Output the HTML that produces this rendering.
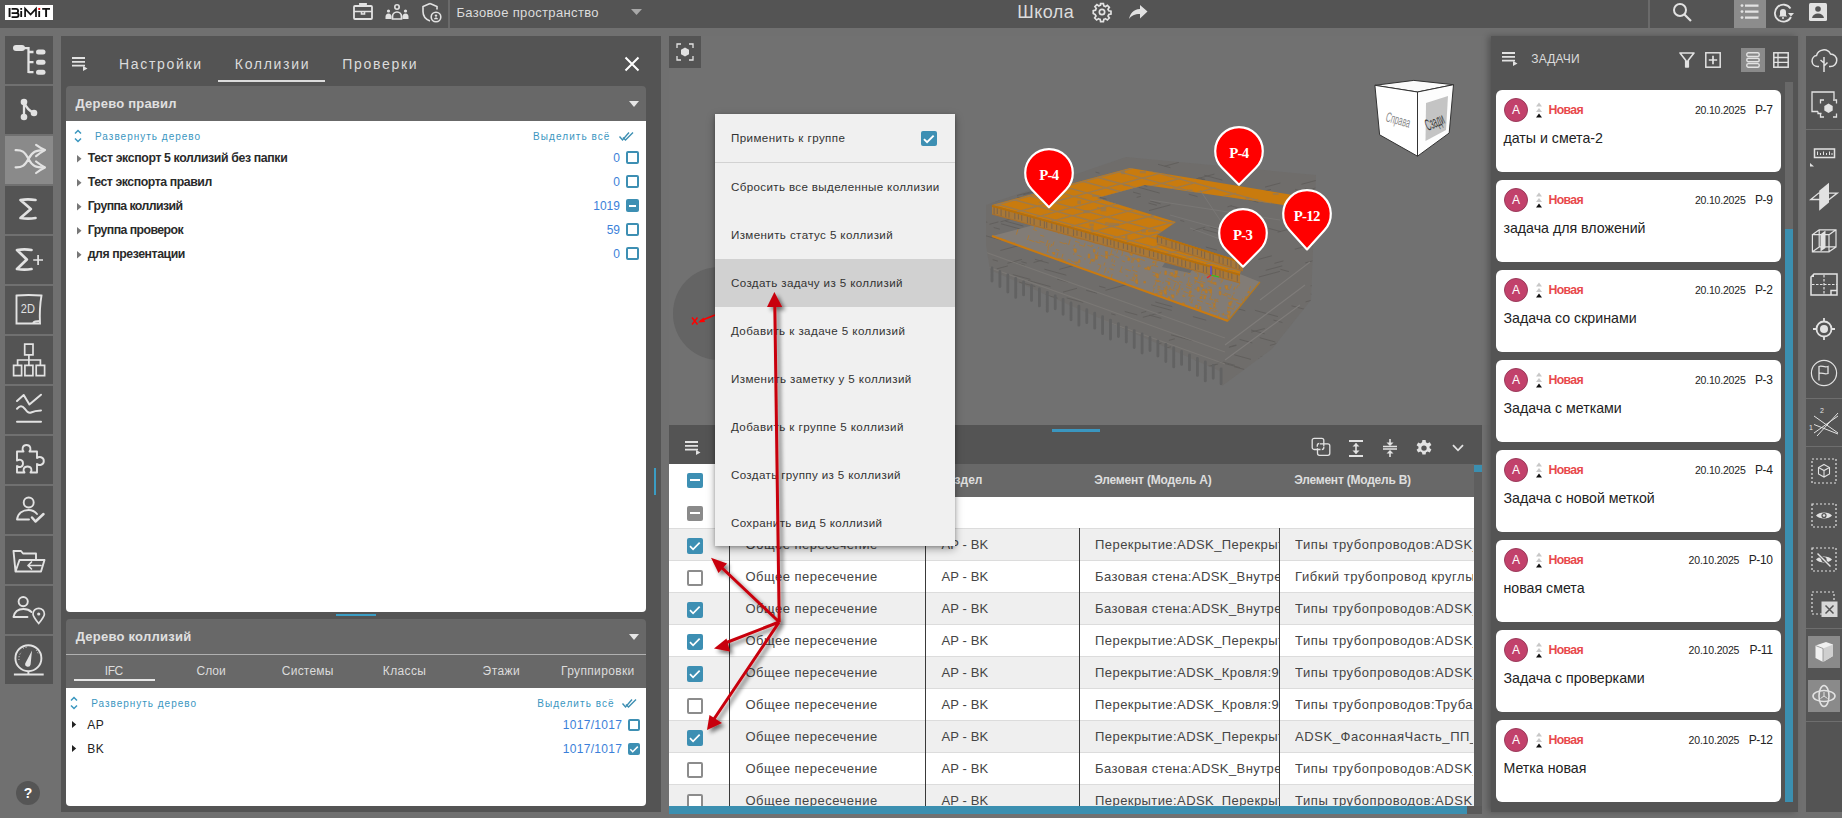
<!DOCTYPE html>
<html><head><meta charset="utf-8">
<style>
*{margin:0;padding:0;box-sizing:border-box}
html,body{width:1842px;height:818px;overflow:hidden;background:#707070;font-family:"Liberation Sans",sans-serif;position:relative}
.a{position:absolute}
.t{position:absolute;white-space:nowrap;line-height:1}
svg{position:absolute;overflow:visible}
</style></head><body>
<!-- TOPBAR -->
<div class="a" style="left:0px;top:0px;width:1842px;height:28px;background:#545454;"></div>
<div class="a" style="left:5px;top:5px;width:48px;height:15px;background:#fff;"></div>
<svg style="left:5px;top:5px" width="48" height="15" viewBox="0 0 48 15"><rect x="3.6" y="3" width="1.9" height="9" fill="#111"/><path d="M6.6 3.9h4.4a2.1 2.1 0 0 1 0 4.2H6.6M6.6 8.1h5a2 2 0 0 1 0 4H6.6" fill="none" stroke="#111" stroke-width="1.8"/><rect x="15.3" y="6" width="1.8" height="6" fill="#111"/><rect x="15.3" y="3" width="1.8" height="1.8" fill="#111"/><path d="M20.1 12V3.6l5.5 6L31 3.6V12" fill="none" stroke="#111" stroke-width="1.7"/><rect x="33.3" y="6" width="1.8" height="6" fill="#111"/><rect x="33.3" y="3" width="1.9" height="1.9" fill="#e00"/><path d="M37.2 3.9h7.8M41.1 3.9V12" fill="none" stroke="#111" stroke-width="1.9"/></svg>
<svg style="left:353px;top:2px" width="20" height="18" viewBox="0 0 20 18"><path d="M7 3.8V2h6v1.8" fill="none" stroke="#e2e2e2" stroke-width="1.8"/><rect x="1" y="4" width="18" height="13" rx="1" fill="none" stroke="#e2e2e2" stroke-width="1.8"/><path d="M1 9.5h18M8.5 9.5v2.5h3v-2.5" fill="none" stroke="#e2e2e2" stroke-width="1.6"/></svg>
<svg style="left:385px;top:4px" width="24" height="16" viewBox="0 0 24 16"><circle cx="12" cy="3" r="2.2" fill="none" stroke="#e2e2e2" stroke-width="1.6"/><path d="M7.5 15v-2.5c0-2.5 2-4.5 4.5-4.5s4.5 2 4.5 4.5V15z" fill="none" stroke="#e2e2e2" stroke-width="1.7"/><circle cx="3.5" cy="7" r="1.6" fill="#e2e2e2"/><circle cx="20.5" cy="7" r="1.6" fill="#e2e2e2"/><path d="M0.5 15v-2.5c0-1.5 1-3 3-3s3 1.5 3 3V15zM17.5 15v-2.5c0-1.5 1-3 3-3s3 1.5 3 3V15z" fill="#e2e2e2"/></svg>
<svg style="left:421px;top:2px" width="22" height="22" viewBox="0 0 22 22"><path d="M9 1.5L2 4.5v5c0 4.5 3 8 7 9.5" fill="none" stroke="#e2e2e2" stroke-width="1.6"/><path d="M9 1.5l7 3v3" fill="none" stroke="#e2e2e2" stroke-width="1.6"/><circle cx="15" cy="15" r="4.8" fill="#545454" stroke="#e2e2e2" stroke-width="1.6"/><circle cx="15" cy="13.6" r="1.2" fill="#e2e2e2"/><path d="M12.8 17.3c.5-1.2 1.2-1.7 2.2-1.7s1.7.5 2.2 1.7z" fill="#e2e2e2"/></svg>
<div class="a" style="left:448px;top:0px;width:2px;height:28px;background:#6a6a6a;"></div>
<div class="t" style="left:456.48px;top:6.40px;font-size:13px;color:#dcdcdc;letter-spacing:0.343px">Базовое пространство</div>
<svg style="left:631px;top:9px" width="11" height="6" viewBox="0 0 11 6"><path d="M0 0h11L5.5 6z" fill="#a8a8a8"/></svg>
<div class="t" style="left:1017.28px;top:2.56px;font-size:18px;color:#dcdcdc;letter-spacing:0.434px">Школа</div>
<svg style="left:1092px;top:2px" width="20" height="20" viewBox="0 0 24 24"><path fill="none" stroke="#e2e2e2" stroke-width="2" d="M10.3 2h3.4l.5 2.7c.7.2 1.3.5 1.9.9l2.3-1.6 2.4 2.4-1.6 2.3c.4.6.7 1.2.9 1.9l2.7.5v3.4l-2.7.5c-.2.7-.5 1.3-.9 1.9l1.6 2.3-2.4 2.4-2.3-1.6c-.6.4-1.2.7-1.9.9l-.5 2.7h-3.4l-.5-2.7c-.7-.2-1.3-.5-1.9-.9l-2.3 1.6-2.4-2.4 1.6-2.3c-.4-.6-.7-1.2-.9-1.9L1.5 13.7v-3.4l2.7-.5c.2-.7.5-1.3.9-1.9L3.5 5.6l2.4-2.4 2.3 1.6c.6-.4 1.2-.7 1.9-.9z"/><circle cx="12" cy="12" r="3.2" fill="none" stroke="#e2e2e2" stroke-width="2"/></svg>
<svg style="left:1129px;top:5px" width="19" height="15" viewBox="0 0 19 15"><path d="M11 0v4C4 4.5 1 9 0 14c2.5-3.5 5.5-5 11-5v4.5L18.5 6.5z" fill="#e2e2e2"/></svg>
<div class="a" style="left:1648px;top:0px;width:2px;height:28px;background:#6a6a6a;"></div>
<svg style="left:1672px;top:2px" width="22" height="22" viewBox="0 0 22 22"><circle cx="8" cy="8" r="6" fill="none" stroke="#e2e2e2" stroke-width="2"/><path d="M12.5 12.5L19 19" stroke="#e2e2e2" stroke-width="2.2"/></svg>
<div class="a" style="left:1734px;top:0px;width:32px;height:28px;background:#8c8c8c;"></div>
<svg style="left:1740px;top:4px" width="20" height="16" viewBox="0 0 20 16"><circle cx="2" cy="1.6" r="1.4" fill="#e2e2e2"/><circle cx="2" cy="7.6" r="1.4" fill="#e2e2e2"/><circle cx="2" cy="13.6" r="1.4" fill="#e2e2e2"/><path d="M5 1.6h13.5M5 7.6h13.5M5 13.6h13.5" stroke="#e2e2e2" stroke-width="2.2"/></svg>
<svg style="left:1773px;top:2px" width="22" height="22" viewBox="0 0 22 22"><path d="M17.5 6.5A8.5 8.5 0 1 0 18 15" fill="none" stroke="#e2e2e2" stroke-width="1.8"/><path d="M15 11h6l-3 3.5z" fill="#e2e2e2"/><path d="M6 14.5h8l-1-1.5v-3a3 3 0 0 0-6 0v3z" fill="#e2e2e2"/><circle cx="10" cy="16" r="1" fill="#e2e2e2"/></svg>
<svg style="left:1809px;top:3px" width="18" height="18" viewBox="0 0 18 18"><rect width="18" height="18" rx="1.5" fill="#e2e2e2"/><circle cx="9" cy="6" r="2.8" fill="#545454"/><path d="M3 15c.5-3 3-4.5 6-4.5s5.5 1.5 6 4.5z" fill="#545454"/></svg>
<!-- LEFT TOOLBAR -->
<div class="a" style="left:5px;top:36px;width:48px;height:48px;background:#545454;"></div>
<svg style="left:5px;top:36px" width="48" height="48" viewBox="0 0 48 48"><rect x="8" y="9" width="12" height="6" rx="3" fill="#e2e2e2"/><path d="M19 12.2h4.5V37M23.5 16h5M23.5 26.2h5M23.5 36.2h5" fill="none" stroke="#e2e2e2" stroke-width="2.3"/><rect x="31" y="13.6" width="9.5" height="5" rx="2.5" fill="#e2e2e2"/><rect x="31" y="23.8" width="9.5" height="5" rx="2.5" fill="#e2e2e2"/><rect x="31" y="33.8" width="9.5" height="5" rx="2.5" fill="#e2e2e2"/></svg>
<div class="a" style="left:5px;top:86px;width:48px;height:48px;background:#545454;"></div>
<svg style="left:5px;top:86px" width="48" height="48" viewBox="0 0 48 48"><path d="M19 16V31M19 16Q22 24 29 27" fill="none" stroke="#e2e2e2" stroke-width="2.3"/><circle cx="19" cy="16" r="3.3" fill="#e2e2e2"/><circle cx="19" cy="31" r="3.3" fill="#e2e2e2"/><circle cx="29" cy="27" r="3.3" fill="#e2e2e2"/></svg>
<div class="a" style="left:5px;top:136px;width:48px;height:48px;background:#8a8a8a;"></div>
<svg style="left:5px;top:136px" width="48" height="48" viewBox="0 0 48 48"><path d="M10.6 14.1C17 13.8 19.5 15.5 23.5 22.9S30.5 31.4 39.5 31.4M10.6 31.4C17 31.6 19.5 30 23.5 22.9S30.5 14.1 39.5 14.1" fill="none" stroke="#e2e2e2" stroke-width="2.2" stroke-linecap="round"/><path d="M31.1 8.8Q35.5 12 39.9 14.1Q35.5 16.5 31.1 20.2M31.1 25.5Q35.5 29 39.9 31.4Q35.5 33.5 31.1 37" fill="none" stroke="#e2e2e2" stroke-width="2.2" stroke-linecap="round" stroke-linejoin="round"/></svg>
<div class="a" style="left:5px;top:186px;width:48px;height:48px;background:#545454;"></div>
<svg style="left:5px;top:186px" width="48" height="48" viewBox="0 0 48 48"><path d="M30.5 14C26 13.3 20 13.3 15.5 14L25.8 23L15.5 32C20 32.7 26 32.7 30.5 32" fill="none" stroke="#e2e2e2" stroke-width="2.7" stroke-linecap="round" stroke-linejoin="round"/></svg>
<div class="a" style="left:5px;top:236px;width:48px;height:48px;background:#545454;"></div>
<svg style="left:5px;top:236px" width="48" height="48" viewBox="0 0 48 48"><path d="M26.5 14C22.5 13.3 16.5 13.3 12 14L21.8 23.5L12 33C16.5 33.7 22.5 33.7 26.5 33" fill="none" stroke="#e2e2e2" stroke-width="2.7" stroke-linecap="round" stroke-linejoin="round"/><path d="M28.2 24h9.8M33.1 19.1v9.8" stroke="#e2e2e2" stroke-width="1.7"/></svg>
<div class="a" style="left:5px;top:286px;width:48px;height:48px;background:#545454;"></div>
<svg style="left:5px;top:286px" width="48" height="48" viewBox="0 0 48 48"><path d="M11.5 9.5C19 8.8 28 8.8 36.5 9.5C35 18 34.5 28 35 37.5H11.5z" fill="none" stroke="#e2e2e2" stroke-width="1.9"/><path d="M28 37c1-1.5 3-2 7-2" fill="none" stroke="#e2e2e2" stroke-width="1.8"/><text x="0" y="0" font-size="12.5" fill="#e2e2e2" font-family="Liberation Sans" transform="translate(15.8 27) scale(0.88 1)">2D</text></svg>
<div class="a" style="left:5px;top:336px;width:48px;height:48px;background:#545454;"></div>
<svg style="left:5px;top:336px" width="48" height="48" viewBox="0 0 48 48"><path d="M19.7 8.2h8.3v10.6h-8.3zM8.6 29.3h8v10.3h-8zM19.9 29.3h8v10.3h-8zM31.2 29.3h8.4v10.3h-8.4zM23.9 18.8V24M12.6 29.3V24h22.8v5.3M23.9 24v5.3" fill="none" stroke="#e2e2e2" stroke-width="1.7"/></svg>
<div class="a" style="left:5px;top:386px;width:48px;height:48px;background:#545454;"></div>
<svg style="left:5px;top:386px" width="48" height="48" viewBox="0 0 48 48"><path d="M12 15L18.7 9L24.4 18.5L36 8.7M12 22.7C15 19.5 17 19.5 20 23C22 26 24 27.5 26 26.5C29 25 33 24.5 36 24.4M12 35.7H36" fill="none" stroke="#e2e2e2" stroke-width="2" stroke-linecap="round" stroke-linejoin="round"/></svg>
<div class="a" style="left:5px;top:436px;width:48px;height:48px;background:#545454;"></div>
<svg style="left:5px;top:436px" width="48" height="48" viewBox="0 0 48 48"><path d="M12 15.5h6.5c-1.8-2-1.2-6.5 3-6.5s4.8 4.5 3 6.5H32v6.5c2-1.8 6.8-1.2 6.8 3s-4.8 4.8-6.8 3V36.5h-6.5c1.8-2 1.2-6-3-6s-4.8 4-3 6H12v-6.5c2 1.8 6 1.2 6-2.6s-4-4.5-6-2.8z" fill="none" stroke="#e2e2e2" stroke-width="1.9" stroke-linejoin="round"/></svg>
<div class="a" style="left:5px;top:486px;width:48px;height:48px;background:#545454;"></div>
<svg style="left:5px;top:486px" width="48" height="48" viewBox="0 0 48 48"><circle cx="23.7" cy="16.5" r="5" fill="none" stroke="#e2e2e2" stroke-width="1.9"/><path d="M12 33.5C13 27 18 24 23.5 24C27 24 30 25.5 32 28M12 33.5h12" fill="none" stroke="#e2e2e2" stroke-width="1.9" stroke-linecap="round"/><path d="M27 31.5l3.5 4L38.5 28" fill="none" stroke="#e2e2e2" stroke-width="2.5" stroke-linecap="round" stroke-linejoin="round"/></svg>
<div class="a" style="left:5px;top:536px;width:48px;height:48px;background:#545454;"></div>
<svg style="left:5px;top:536px" width="48" height="48" viewBox="0 0 48 48"><path d="M10.5 35.5L8.5 15H16l2 2.5h13v6M10.5 35.5H36L39.5 24H14.5z" fill="none" stroke="#e2e2e2" stroke-width="1.9" stroke-linejoin="round"/><path d="M36 29.5H23M26.5 26l-3.5 3.5l3.5 3.5" fill="none" stroke="#e2e2e2" stroke-width="1.7" stroke-linecap="round" stroke-linejoin="round"/></svg>
<div class="a" style="left:5px;top:586px;width:48px;height:48px;background:#545454;"></div>
<svg style="left:5px;top:586px" width="48" height="48" viewBox="0 0 48 48"><circle cx="18.2" cy="15.6" r="4.6" fill="none" stroke="#e2e2e2" stroke-width="1.9"/><path d="M8.5 31C9.5 25.5 13 23 18.5 23C22 23 24.5 24 26.5 26M8.5 31h14" fill="none" stroke="#e2e2e2" stroke-width="1.9" stroke-linecap="round"/><path d="M33.7 37.5C30 33 28 30.5 28 28a5.7 5.7 0 0 1 11.4 0c0 2.5-2 5-5.7 9.5z" fill="none" stroke="#e2e2e2" stroke-width="1.7"/><circle cx="33.7" cy="28" r="1.6" fill="#e2e2e2"/></svg>
<div class="a" style="left:5px;top:636px;width:48px;height:48px;background:#545454;"></div>
<svg style="left:5px;top:636px" width="48" height="48" viewBox="0 0 48 48"><circle cx="23.4" cy="22.2" r="13" fill="none" stroke="#e2e2e2" stroke-width="1.9"/><path d="M8.9 38.5h29.8M23.4 35.2v3.3" fill="none" stroke="#e2e2e2" stroke-width="1.9"/><path d="M20.2 27.5L27 14.5L25.6 28.5A2.6 2.6 0 0 1 20.2 27.5z" fill="#e2e2e2"/><path d="M14 24a9.5 9.5 0 0 1 2.5-8M18 12.5a9.5 9.5 0 0 1 4-1.3M31 14a9.5 9.5 0 0 1 2.5 5" fill="none" stroke="#e2e2e2" stroke-width="1" stroke-dasharray="1 1.8"/></svg>
<div class="a" style="left:16px;top:781px;width:24px;height:24px;border-radius:50%;background:#555"></div>
<div class="t" style="left:23.72px;top:786.15px;font-size:14px;color:#fff;font-weight:bold">?</div>
<!-- LEFT PANEL -->
<div class="a" style="left:61px;top:36px;width:600px;height:776px;background:#545454;"></div>
<div class="a" style="left:66px;top:86px;width:580px;height:35px;background:#686868;border-radius:4px 4px 0 0"></div>
<div class="a" style="left:66px;top:121px;width:580px;height:491px;background:#fff;border-radius:0 0 4px 4px"></div>
<div class="a" style="left:66px;top:619px;width:580px;height:69px;background:#686868;border-radius:4px 4px 0 0"></div>
<div class="a" style="left:66px;top:688px;width:580px;height:118px;background:#fff;border-radius:0 0 4px 4px"></div>
<svg style="left:72px;top:57px" width="16" height="14" viewBox="0 0 16 14"><path d="M0 1h13M0 4.8h13M0 8.6h13" stroke="#e2e2e2" stroke-width="1.8"/><path d="M11 9v5l4.5-2.5z" fill="#e2e2e2"/></svg>
<div class="t" style="left:119.04px;top:56.95px;font-size:14px;color:#dcdcdc;letter-spacing:1.684px">Настройки</div>
<div class="t" style="left:234.84px;top:56.95px;font-size:14px;color:#dcdcdc;letter-spacing:1.695px">Коллизии</div>
<div class="t" style="left:342.24px;top:56.95px;font-size:14px;color:#dcdcdc;letter-spacing:1.698px">Проверки</div>
<div class="a" style="left:218px;top:79.5px;width:107px;height:2.3px;background:#dcdcdc;"></div>
<svg style="left:624px;top:56px" width="16" height="16" viewBox="0 0 16 16"><path d="M1.5 1.5L14.5 14.5M14.5 1.5L1.5 14.5" stroke="#fff" stroke-width="2"/></svg>
<div class="t" style="left:75.48px;top:96.60px;font-size:13px;color:#e0e0e0;font-weight:bold;letter-spacing:0.215px">Дерево правил</div>
<svg style="left:629px;top:101px" width="10" height="6" viewBox="0 0 10 6"><path d="M0 0h10L5 6z" fill="#e6e6e6"/></svg>
<svg style="left:74px;top:129px" width="8" height="14" viewBox="0 0 8 14"><path d="M1 4.5L4 1.5L7 4.5M1 9.5L4 12.5L7 9.5" fill="none" stroke="#3a96bf" stroke-width="1.5"/></svg>
<div class="t" style="left:95.00px;top:131.73px;font-size:10px;color:#3a96bf;letter-spacing:1.002px">Развернуть дерево</div>
<div class="t" style="left:533.10px;top:131.73px;font-size:10px;color:#3a96bf;letter-spacing:1.057px">Выделить всё</div>
<svg style="left:619px;top:132px" width="15" height="9" viewBox="0 0 15 9"><path d="M0.5 4.5l3 3.5L10 0.5M4 5.5l2.5 2.5L14 0.5" fill="none" stroke="#3d8fb3" stroke-width="1.4"/></svg>
<svg style="left:77px;top:154.7px" width="4.5" height="7.5" viewBox="0 0 4.5 7.5"><path d="M0 0L4.5 3.75L0 7.5z" fill="#777"/></svg>
<div class="t" style="left:87.71px;top:151.79px;font-size:12.3px;color:#2a2a2a;font-weight:bold;letter-spacing:-0.371px">Тест экспорт 5 коллизий без папки</div>
<div class="t" style="left:613.31px;top:152.04px;font-size:12px;color:#3b7fd9">0</div>
<div class="a" style="left:626px;top:151.2px;width:13px;height:13px;border:2px solid #3d8fb3;border-radius:2px;background:#fff"></div>
<svg style="left:77px;top:178.7px" width="4.5" height="7.5" viewBox="0 0 4.5 7.5"><path d="M0 0L4.5 3.75L0 7.5z" fill="#777"/></svg>
<div class="t" style="left:87.71px;top:175.79px;font-size:12.3px;color:#2a2a2a;font-weight:bold;letter-spacing:-0.435px">Тест экспорта правил</div>
<div class="t" style="left:613.31px;top:176.04px;font-size:12px;color:#3b7fd9">0</div>
<div class="a" style="left:626px;top:175.2px;width:13px;height:13px;border:2px solid #3d8fb3;border-radius:2px;background:#fff"></div>
<svg style="left:77px;top:202.7px" width="4.5" height="7.5" viewBox="0 0 4.5 7.5"><path d="M0 0L4.5 3.75L0 7.5z" fill="#777"/></svg>
<div class="t" style="left:87.71px;top:199.79px;font-size:12.3px;color:#2a2a2a;font-weight:bold;letter-spacing:-0.581px">Группа коллизий</div>
<div class="t" style="left:593.28px;top:200.04px;font-size:12px;color:#3b7fd9">1019</div>
<div class="a" style="left:626px;top:199.2px;width:13px;height:13px;background:#3d8fb3;border-radius:2px"></div>
<div class="a" style="left:629px;top:204.7px;width:7px;height:2px;background:#fff"></div>
<svg style="left:77px;top:226.7px" width="4.5" height="7.5" viewBox="0 0 4.5 7.5"><path d="M0 0L4.5 3.75L0 7.5z" fill="#777"/></svg>
<div class="t" style="left:87.71px;top:223.79px;font-size:12.3px;color:#2a2a2a;font-weight:bold;letter-spacing:-0.549px">Группа проверок</div>
<div class="t" style="left:606.63px;top:224.04px;font-size:12px;color:#3b7fd9">59</div>
<div class="a" style="left:626px;top:223.2px;width:13px;height:13px;border:2px solid #3d8fb3;border-radius:2px;background:#fff"></div>
<svg style="left:77px;top:250.7px" width="4.5" height="7.5" viewBox="0 0 4.5 7.5"><path d="M0 0L4.5 3.75L0 7.5z" fill="#777"/></svg>
<div class="t" style="left:87.71px;top:247.79px;font-size:12.3px;color:#2a2a2a;font-weight:bold;letter-spacing:-0.433px">для презентации</div>
<div class="t" style="left:613.31px;top:248.04px;font-size:12px;color:#3b7fd9">0</div>
<div class="a" style="left:626px;top:247.2px;width:13px;height:13px;border:2px solid #3d8fb3;border-radius:2px;background:#fff"></div>
<div class="a" style="left:336px;top:614px;width:40px;height:2px;background:#3a9dc4;"></div>
<div class="a" style="left:654px;top:468px;width:2px;height:27px;background:#3a9dc4;"></div>
<div class="t" style="left:75.68px;top:630.10px;font-size:13px;color:#e0e0e0;font-weight:bold;letter-spacing:0.239px">Дерево коллизий</div>
<svg style="left:629px;top:633.5px" width="10" height="6" viewBox="0 0 10 6"><path d="M0 0h10L5 6z" fill="#e6e6e6"/></svg>
<div class="a" style="left:66px;top:654px;width:580px;height:1px;background:#b0b0b0;"></div>
<div class="t" style="left:104.82px;top:665.34px;font-size:12px;color:#dcdcdc;letter-spacing:-0.435px">IFC</div>
<div class="t" style="left:196.52px;top:665.34px;font-size:12px;color:#dcdcdc;letter-spacing:0.027px">Слои</div>
<div class="t" style="left:281.82px;top:665.34px;font-size:12px;color:#dcdcdc;letter-spacing:0.230px">Системы</div>
<div class="t" style="left:382.82px;top:665.34px;font-size:12px;color:#dcdcdc;letter-spacing:0.374px">Классы</div>
<div class="t" style="left:482.62px;top:665.34px;font-size:12px;color:#dcdcdc;letter-spacing:0.417px">Этажи</div>
<div class="t" style="left:561.02px;top:665.34px;font-size:12px;color:#dcdcdc;letter-spacing:0.342px">Группировки</div>
<div class="a" style="left:74px;top:679px;width:81px;height:2px;background:#e6e6e6;"></div>
<svg style="left:70px;top:696px" width="8" height="14" viewBox="0 0 8 14"><path d="M1 4.5L4 1.5L7 4.5M1 9.5L4 12.5L7 9.5" fill="none" stroke="#3a96bf" stroke-width="1.5"/></svg>
<div class="t" style="left:91.20px;top:698.74px;font-size:10px;color:#3a96bf;letter-spacing:0.983px">Развернуть дерево</div>
<div class="t" style="left:537.20px;top:698.74px;font-size:10px;color:#3a96bf;letter-spacing:1.075px">Выделить всё</div>
<svg style="left:622px;top:699px" width="15" height="9" viewBox="0 0 15 9"><path d="M0.5 4.5l3 3.5L10 0.5M4 5.5l2.5 2.5L14 0.5" fill="none" stroke="#3d8fb3" stroke-width="1.4"/></svg>
<svg style="left:72px;top:721.0px" width="4.2" height="7" viewBox="0 0 4.2 7"><path d="M0 0L4.2 3.5L0 7z" fill="#222"/></svg>
<div class="t" style="left:87.32px;top:718.84px;font-size:12px;color:#222;letter-spacing:0.452px">AP</div>
<div class="t" style="left:562.72px;top:718.84px;font-size:12px;color:#3b7fd9;letter-spacing:0.304px">1017/1017</div>
<div class="a" style="left:628px;top:719.0px;width:12px;height:12px;border:2px solid #3d8fb3;border-radius:2px;background:#fff"></div>
<svg style="left:72px;top:745.2px" width="4.2" height="7" viewBox="0 0 4.2 7"><path d="M0 0L4.2 3.5L0 7z" fill="#222"/></svg>
<div class="t" style="left:87.32px;top:743.04px;font-size:12px;color:#222;letter-spacing:0.452px">BK</div>
<div class="t" style="left:562.72px;top:743.04px;font-size:12px;color:#3b7fd9;letter-spacing:0.304px">1017/1017</div>
<div class="a" style="left:628px;top:743.2px;width:12px;height:12px;background:#3d8fb3;border-radius:2px"></div>
<svg style="left:628px;top:743.2px" width="12" height="12" viewBox="0 0 12 12"><path d="M2.3 6.3l2.4 2.4L9.8 3.6" fill="none" stroke="#fff" stroke-width="1.5"/></svg>
<!-- VIEWPORT -->
<div class="a" style="left:669px;top:36px;width:822px;height:389px;background:#717171;"></div>
<div class="a" style="left:669px;top:36px;width:32px;height:32px;background:#545454;"></div>
<svg style="left:676px;top:43px" width="18" height="18" viewBox="0 0 18 18"><path d="M1 5V1h4M13 1h4v4M17 13v4h-4M5 17H1v-4" fill="none" stroke="#e2e2e2" stroke-width="1.3"/><path d="M9 4.5l4 2.2v4.6L9 13.5l-4-2.2V6.7z" fill="#e2e2e2"/></svg>
<div class="a" style="left:672.6px;top:267.2px;width:92.8px;height:92.8px;border-radius:50%;background:#646464"></div>
<svg style="left:688px;top:308px" width="30" height="20" viewBox="0 0 30 20"><path d="M4 9.5l5.5 7M9.5 9.5L4 16.5" stroke="#f00" stroke-width="1.5"/><path d="M27 7L12 13" stroke="#f00" stroke-width="1.6"/><path d="M10 14.5l5.5-5l1.5 4.5z" fill="#f00"/></svg>
<svg style="left:0;top:0" width="1842" height="818"><defs><clipPath id="cTop"><path d="M992.0 205.0 L1130.0 168.0 L1293.0 195.0 L1290.0 206.0 L1145.0 185.0 L1097.0 198.0 L1176.0 222.0 L1157.0 235.0 L1243.0 262.0 L1240.0 274.0 Z"/></clipPath><clipPath id="cLow"><path d="M992.0 236.0 L1045.0 222.0 L1240.0 274.0 L1260.0 282.0 L1228.0 321.0 Z"/></clipPath><clipPath id="cBody"><path d="M986.0 205.0 L1126.0 157.0 L1316.0 175.0 L1311.0 300.0 L1272.0 349.0 L1222.0 386.0 L1222.0 372.0 L990.0 270.0 L986.0 245.0 Z"/></clipPath></defs><path d="M986.0 205.0 L1126.0 157.0 L1316.0 175.0 L1311.0 300.0 L1272.0 349.0 L1222.0 386.0 L1222.0 372.0 L990.0 270.0 L986.0 245.0 Z" fill="#6f6d6b"/><g clip-path="url(#cBody)"><path d="M1090.1 194.7l16.4 4.5 M1162.2 244.1l5.0 -1.3 M992.7 259.7l5.2 1.4 M1124.3 350.2l6.3 1.7 M1193.3 378.0l15.0 4.1 M1311.9 170.7l20.4 5.6 M1029.0 187.1l9.8 -2.6 M1041.4 293.8l16.2 4.4 M1166.2 174.4l5.0 1.4 M1211.3 258.3l9.9 -2.7 M1134.1 228.9l19.2 -5.2 M1063.0 292.1l14.0 -3.8 M1228.0 226.2l22.8 6.2 M1122.2 334.1l6.8 1.9 M993.3 313.7l18.6 -5.0 M1277.7 232.2l17.3 -4.6 M1177.2 264.9l20.1 -5.4 M1141.2 312.8l5.0 -1.4 M1200.0 388.4l19.7 5.4 M1111.2 313.8l4.3 1.2 M1037.1 186.9l5.0 -1.3 M1024.0 217.0l11.4 -3.1 M1007.4 263.3l14.5 -3.9 M1258.6 358.7l9.2 2.5 M1102.0 363.4l22.4 6.1 M1039.9 213.4l8.4 2.3 M1180.3 220.4l3.9 1.1 M1105.5 290.3l22.3 -6.0 M1155.3 302.0l16.9 4.6 M1285.8 339.4l20.8 -5.6 M1113.4 251.8l5.9 -1.6 M1001.2 175.5l7.9 2.2 M1095.6 172.1l3.9 1.1 M1014.5 243.6l4.4 -1.2 M1188.8 194.2l8.7 2.4 M1103.8 188.3l20.3 -5.4 M1138.4 271.3l5.5 1.5 M1096.5 220.9l19.9 5.4 M987.9 378.7l14.1 3.8 M1164.7 166.2l14.1 -3.8 M1273.5 320.1l8.9 2.4 M1036.8 337.5l14.2 -3.8 M1092.1 211.3l19.5 -5.2 M1269.9 345.4l19.7 -5.3 M1057.1 279.1l10.7 2.9 M989.5 224.3l8.9 -2.4 M1305.2 262.9l22.0 -5.9 M1304.7 243.9l8.1 2.2 M1046.9 207.0l15.9 -4.3 M1265.7 270.3l16.5 -4.4 M1008.8 311.9l21.4 -5.7 M1235.0 269.9l7.3 -2.0 M1093.1 344.2l22.6 6.2 M1116.5 377.8l17.9 4.9 M1023.2 194.8l21.3 -5.7 M1029.7 350.1l22.8 -6.1 M1099.1 286.2l6.4 1.7 M1310.1 309.4l14.0 -3.8 M1127.5 360.5l19.8 5.4 M1065.6 227.4l8.5 -2.3 M1068.2 256.4l6.4 -1.7 M1100.3 265.4l15.1 -4.1 M1123.0 371.1l13.6 -3.6 M1158.0 164.3l12.4 3.4 M981.3 343.8l7.2 2.0 M1226.6 288.0l10.2 -2.7 M1168.9 340.4l5.9 -1.6 M1064.5 223.7l18.8 -5.0 M1171.0 334.8l21.5 5.9 M1188.3 276.3l13.8 -3.7 M1133.8 282.7l13.1 -3.5 M1217.7 361.6l22.1 6.0 M1170.2 377.0l20.1 5.5 M1021.4 261.7l5.3 1.4 M1004.9 314.0l19.0 -5.1 M1032.5 324.7l16.6 4.5 M1280.2 382.5l8.1 -2.2 M1115.4 272.1l23.0 -6.2 M1034.9 259.3l13.8 3.8 M1046.6 233.3l17.8 4.9 M1168.4 261.3l4.2 1.2 M1192.1 277.8l5.1 -1.4 M1248.0 383.5l5.9 1.6 M993.5 339.2l9.1 2.5 M1123.6 369.6l19.7 5.4 M1030.8 371.4l14.9 -4.0 M1010.4 173.2l17.2 4.7 M1004.6 375.8l16.1 -4.3 M1008.5 356.9l5.2 -1.4 M1134.3 238.0l14.5 -3.9 M1071.1 189.7l14.0 3.8 M1017.2 197.1l4.8 1.3 M1086.1 230.2l18.5 5.1 M1150.0 200.9l10.6 2.9 M1065.2 163.5l18.0 -4.8 M1044.4 269.2l21.9 6.0 M1258.4 259.4l13.4 -3.6 M1113.6 276.5l17.2 -4.6 M1096.5 351.4l17.5 -4.7 M1117.6 239.9l4.9 1.3 M1004.0 330.4l8.8 2.4 M1008.7 353.5l20.7 -5.5 M1075.9 215.7l9.5 2.6 M1033.6 262.5l8.9 -2.4 M1310.7 285.8l8.6 -2.3 M1085.2 242.0l3.9 1.1 M1141.4 275.6l7.7 -2.1 M981.7 220.8l5.6 1.5 M994.2 165.2l9.7 2.7 M1179.1 281.7l18.4 -4.9 M1223.4 362.2l11.4 3.1 M1314.8 194.4l17.9 -4.8 M994.9 352.1l21.1 -5.7 M1229.5 346.8l6.6 -1.8 M1151.5 352.0l19.4 -5.2 M1178.6 365.4l17.1 -4.6 M1058.2 167.2l6.4 1.8 M1015.7 352.2l14.7 -3.9 M1192.9 316.6l13.3 3.6 M1251.2 332.1l13.6 -3.6 M1204.2 175.2l18.1 4.9 M1005.3 221.1l18.0 4.9 M1231.5 384.4l13.4 3.7 M1142.9 317.3l18.7 -5.0 M1198.5 177.8l6.7 1.8 M1232.7 230.0l14.8 4.1 M1000.6 221.8l16.8 -4.5 M1209.7 226.9l13.8 3.8 M1138.6 187.3l21.1 5.8 M1312.6 375.3l4.2 1.1 M1258.8 382.7l12.5 3.4 M1051.3 377.5l7.9 -2.1 M1028.2 280.5l22.3 6.1 M1258.9 277.0l21.0 -5.6 M1058.7 366.5l13.3 3.6 M981.2 273.1l12.6 3.4 M1027.8 239.1l10.0 -2.7 M980.6 332.7l20.1 5.5 M1295.0 324.0l21.3 5.8 M1106.6 250.4l23.2 -6.2 M1102.6 258.5l9.2 2.5 M1014.6 352.0l9.4 -2.5 M1064.8 221.1l13.7 3.8 M1106.9 379.9l20.9 -5.6 M1194.5 370.1l22.0 -5.9 M1224.7 171.4l18.0 4.9 M1235.9 308.2l9.4 2.6 M1295.1 189.3l13.0 3.5 M1081.2 330.0l22.7 6.2 M1203.0 229.2l14.6 4.0 M1036.9 197.2l7.9 -2.1 M1149.0 210.6l21.4 -5.7 M1133.0 192.1l7.6 2.1 M1096.3 181.0l8.5 2.3 M1173.7 364.1l18.3 5.0 M1120.7 280.6l11.1 3.0 M1001.1 223.8l22.6 6.2 M1151.2 304.8l20.5 5.6 M1072.1 217.1l11.6 3.2 M1304.3 355.2l20.7 5.7 M991.0 323.2l21.2 5.8 M1179.6 160.0l11.4 -3.1 M1260.7 356.8l22.6 6.2 M1017.1 195.5l14.0 -3.7 M1300.1 326.0l16.4 -4.4 M1135.5 286.8l4.6 -1.2 M1059.1 371.6l16.3 4.5 M1023.5 217.9l16.2 -4.3 M1018.1 176.2l14.0 -3.8 M1111.9 211.4l15.5 4.2 M1082.5 266.0l22.4 -6.0 M1280.5 269.3l8.4 2.3 M1306.6 322.1l9.8 2.7 M1149.4 315.1l12.0 3.3 M1206.9 372.8l8.2 2.3 M1094.9 256.7l17.1 4.7 M1251.0 330.0l13.6 3.7 M1309.8 231.7l19.7 5.4 M1055.3 334.9l9.6 -2.6 M1148.6 203.1l8.2 2.2 M1206.2 378.2l6.7 1.8 M1052.4 384.0l6.6 1.8 M1000.4 250.5l21.2 -5.7 M1229.1 389.4l21.9 6.0 M1043.1 375.3l18.3 5.0 M1205.9 247.1l11.1 3.0 M1037.5 160.7l9.3 2.5 M1304.9 188.5l22.5 6.1 M1101.3 349.0l19.7 5.4 M996.7 268.9l11.1 -3.0 M1045.6 243.8l21.2 5.8 M1119.7 346.7l18.7 5.1 M991.9 174.4l21.6 5.9 M1234.1 366.7l10.4 2.8 M1305.6 301.9l8.9 -2.4 M1087.6 223.4l3.9 -1.1 M1291.6 305.8l22.1 6.0 M1059.5 269.3l22.3 -6.0 M1111.4 217.7l12.2 3.3 M1295.6 202.1l19.4 -5.2 M1259.7 337.7l15.6 4.3 M1088.6 243.2l19.0 5.2 M1047.1 333.2l8.6 2.4 M991.5 287.1l10.2 -2.7 M1280.4 387.2l9.0 2.5 M1012.8 274.6l17.6 4.8 M1059.6 255.9l15.8 -4.2 M1234.3 354.8l16.7 4.6 M1265.9 227.6l14.8 4.0 M1230.9 205.8l8.6 2.4 M1032.1 363.4l15.0 4.1 M1114.7 388.3l13.7 3.7 M1254.9 310.3l23.0 6.3 M1141.4 348.4l20.1 -5.4 M993.7 227.5l6.2 1.7 M1310.8 294.1l21.8 6.0 M1274.5 263.3l8.9 -2.4 M1301.5 184.3l15.4 -4.1 M1054.0 244.8l6.6 1.8 M1066.7 297.9l16.5 4.5 M983.9 235.3l17.0 4.6 M1086.1 206.8l19.2 -5.2 M1001.5 183.3l11.5 -3.1 M1197.3 181.0l7.0 -1.9 M1119.3 225.2l9.8 -2.6 M1086.2 290.3l10.8 2.9 M1273.8 389.2l10.9 3.0 M1227.5 206.8l4.0 -1.1 M1124.1 348.7l11.7 -3.1 M1136.7 197.4l4.2 -1.1 M1197.8 369.3l5.6 -1.5 M1106.1 276.0l6.7 1.8 M1157.2 372.9l6.0 1.6 M1253.6 382.4l7.7 2.1 M1300.6 384.4l13.2 3.6 M1294.9 249.2l21.3 -5.7 M1260.3 196.9l19.0 5.2 M1117.5 354.7l19.9 5.4 M1054.2 251.9l13.9 3.8 M1021.8 216.8l17.9 -4.8 M994.0 289.3l18.5 5.1 M1265.0 187.1l15.4 -4.1 M1193.2 230.4l12.0 -3.2 M1124.8 311.5l12.5 3.4 M987.9 302.3l13.3 3.6 M1239.6 339.4l12.7 3.5 M1140.9 184.6l6.3 1.7 M1011.2 261.7l13.7 3.7 M1196.4 178.9l18.0 -4.8 M1153.9 172.5l13.6 3.7 M1303.3 191.3l20.4 -5.5 M1228.9 347.4l7.6 -2.0 M1147.2 380.0l21.6 5.9 M1248.0 374.0l5.1 1.4 M1237.1 196.5l21.2 5.8 M1257.3 193.0l13.6 -3.6 M1050.8 220.5l13.6 3.7 M992.5 201.9l7.0 -1.9 M1211.1 365.9l7.1 -1.9 M1019.1 282.1l16.2 4.4" stroke="#5f5d5b" stroke-width="1" fill="none" opacity="0.85"/><path d="M985 252 L1225 338" stroke="#7a7774" stroke-width="1.2"/><path d="M985 266 L1225 352" stroke="#7a7774" stroke-width="1.2"/><path d="M985 278 L1225 364" stroke="#7a7774" stroke-width="1.2"/><path d="M1225 345 L1305 285 M1225 360 L1300 305 M1260 300 L1310 262" stroke="#7f7c7a" stroke-width="1.1" fill="none"/></g><path d="M992.0 268.0V281.0 M999.9 271.5V286.5 M1007.8 275.0V292.0 M1015.7 278.4V297.4 M1023.6 281.9V294.9 M1031.5 285.4V300.4 M1039.4 288.9V305.9 M1047.3 292.3V311.3 M1055.2 295.8V308.8 M1063.1 299.3V314.3 M1071.0 302.8V319.8 M1078.9 306.2V325.2 M1086.8 309.7V322.7 M1094.7 313.2V328.2 M1102.6 316.7V333.7 M1110.5 320.1V339.1 M1118.4 323.6V336.6 M1126.3 327.1V342.1 M1134.2 330.6V347.6 M1142.1 334.0V353.0 M1150.0 337.5V350.5 M1157.9 341.0V356.0 M1165.8 344.5V361.5 M1173.7 347.9V366.9 M1181.6 351.4V364.4 M1189.5 354.9V369.9 M1197.4 358.4V375.4 M1205.3 361.9V380.9 M1213.2 365.3V378.3 M1221.1 368.8V383.8" stroke="#626262" stroke-width="2.8" fill="none" stroke-linecap="round"/><path d="M992.0 236.0 L1045.0 222.0 L1240.0 274.0 L1260.0 282.0 L1228.0 321.0 Z" fill="#827c76"/><g clip-path="url(#cLow)"><path d="M1236.0 302.4l5.7 2.0 M1259.7 305.6l5.3 1.9 M1257.7 306.7l5.1 1.8 M1088.6 239.4l5.4 1.9 M1204.3 274.5l4.6 1.6 M996.0 237.5l4.4 1.6 M1175.5 263.7l0.8 -2.5 M1009.5 245.4l2.0 0.7 M1097.3 254.2l0.8 -2.4 M1144.5 291.8l2.6 0.9 M1059.6 242.0l5.2 1.8 M1090.8 275.6l4.2 1.5 M1189.4 294.6l5.0 1.8 M1226.2 319.2l3.4 1.2 M1049.6 224.4l1.3 -4.0 M1061.8 257.8l1.2 -3.8 M1213.6 307.4l2.9 1.0 M1245.8 298.0l0.5 -1.5 M1209.4 298.6l3.6 1.3 M1050.7 247.0l1.0 -3.0 M1211.2 283.7l0.8 -2.7 M1155.5 265.1l0.8 -2.7 M1242.4 321.2l1.5 0.5 M1105.3 254.1l5.0 1.8 M1230.5 306.3l1.8 -5.7 M1205.3 291.6l1.2 -3.7 M1212.0 280.7l1.5 -4.9 M1107.9 273.1l0.6 -1.8 M1057.4 258.2l5.9 2.1 M1056.6 257.2l1.5 -4.7 M1208.3 280.6l4.3 1.5 M1233.7 294.1l0.5 -1.7 M1255.2 288.6l2.4 0.9 M1041.1 226.7l1.4 -4.4 M1181.8 290.0l0.6 -1.9 M1084.0 258.7l1.5 0.5 M1116.7 253.3l0.9 -2.9 M1172.2 269.2l1.6 0.6 M1155.1 263.9l1.5 -4.8 M1103.5 240.2l5.4 1.9 M1000.4 238.4l6.2 2.2 M1158.7 280.9l2.3 0.8 M1136.2 254.2l6.0 2.1 M1098.1 249.0l0.6 -1.9 M1058.6 234.0l1.6 -5.2 M1125.3 269.1l5.7 2.0 M1222.9 315.6l0.8 -2.7 M1157.5 285.9l2.6 0.9 M1175.3 275.5l4.6 1.6 M1110.9 278.6l1.4 -4.6 M1077.3 255.1l4.2 1.5 M1164.2 261.3l2.4 0.8 M1212.7 278.7l2.2 0.8 M1121.9 260.8l3.0 1.1 M1259.5 298.7l6.1 2.1 M1149.5 257.9l5.0 1.8 M1091.1 245.1l2.4 0.9 M1027.4 239.9l1.5 -4.7 M1187.3 285.2l4.4 1.5 M1221.9 282.0l1.3 -4.2 M1135.3 282.8l1.8 -5.6 M1212.4 283.4l4.5 1.6 M1121.7 255.8l1.1 -3.4 M1208.2 286.7l3.5 1.2 M1183.5 291.4l5.9 2.1 M1201.2 279.7l1.2 -3.8 M1033.7 229.9l1.6 -5.1 M1153.0 292.4l1.3 -4.0 M1167.7 278.3l4.0 1.4 M1239.1 318.4l1.0 -3.3 M1079.0 229.6l1.7 0.6 M1124.0 284.5l1.1 -3.4 M1120.4 271.2l1.6 -4.9 M1158.2 291.7l3.3 1.2 M1075.0 241.1l4.5 1.6 M1165.8 295.6l1.0 -3.1 M1233.8 290.1l0.9 -2.8 M1075.4 234.4l5.5 2.0 M1125.7 275.5l2.3 0.8 M1199.4 297.7l2.9 1.0 M1149.3 270.4l1.0 -3.1 M1217.6 318.7l1.8 -5.7 M1080.2 238.9l1.5 0.5 M1253.2 300.9l1.9 0.7 M1105.6 246.9l0.7 -2.2 M1209.3 312.1l1.4 -4.3 M1207.4 281.2l5.5 1.9 M1201.3 293.2l1.1 -3.5 M1165.5 286.7l2.1 0.7 M1040.3 235.1l3.8 1.3 M1180.2 265.4l5.5 1.9 M1179.1 281.3l3.3 1.1 M1237.3 322.8l4.5 1.6 M1189.3 285.0l0.9 -3.0 M1162.7 283.5l0.5 -1.6 M1182.1 295.6l3.2 1.1 M1174.5 269.2l3.5 1.2 M1182.2 270.3l5.4 1.9 M1154.9 285.5l1.9 -6.1 M1214.3 301.4l0.9 -2.8 M1197.4 274.7l1.5 -4.9 M1157.0 293.1l1.5 0.5 M1246.3 304.6l1.6 -5.2 M1187.7 284.0l1.5 -4.7 M1189.4 301.2l1.1 -3.6 M1047.8 248.1l1.6 -5.1 M1189.1 296.4l1.6 -5.2 M1097.9 264.1l3.0 1.1 M1203.3 270.8l4.2 1.5 M1072.6 236.6l5.9 2.1 M1016.3 234.6l1.9 -5.9 M1152.9 275.2l4.6 1.6 M1059.3 258.3l4.7 1.7 M1238.7 325.0l2.1 0.7 M1197.8 303.6l2.3 0.8 M1222.4 294.2l5.0 1.8 M1193.9 280.7l5.9 2.1 M1257.2 297.5l0.5 -1.5 M1211.5 310.5l5.0 1.8 M1231.7 298.6l1.0 -3.2 M1152.7 264.9l5.3 1.9 M1194.8 283.8l1.0 -3.3 M1255.8 299.8l2.9 1.0 M1258.5 306.6l0.9 -3.0 M1263.0 300.7l2.9 1.0 M1233.4 309.8l1.4 -4.3 M1215.7 300.7l2.7 1.0 M1188.6 278.9l0.5 -1.6 M1234.1 289.2l0.9 -2.7 M1227.7 297.8l3.1 1.1 M1181.2 270.3l1.6 -5.0 M1100.7 255.3l3.7 1.3 M1110.5 254.0l3.7 1.3 M1230.2 288.3l1.3 -4.2 M1237.2 303.1l4.3 1.5 M1076.3 264.4l1.0 -3.1 M1139.7 266.9l0.5 -1.6 M1120.8 281.8l5.2 1.8 M1176.6 290.1l1.5 0.5 M1266.3 299.3l4.2 1.5 M1214.7 304.1l1.6 -5.1 M1243.2 311.6l2.4 0.9 M1037.6 255.0l5.6 2.0 M1260.0 291.2l4.3 1.5 M1077.4 229.1l1.3 -4.1 M1254.4 302.2l3.6 1.3 M1265.7 291.4l1.6 0.6 M1139.5 258.9l5.5 1.9 M1224.6 293.0l6.2 2.2 M1079.3 244.7l4.7 1.7 M1187.8 273.2l3.0 1.1 M1064.5 243.0l2.6 0.9 M1182.8 307.5l2.4 0.8 M1235.8 319.4l1.8 -5.5 M1068.5 245.0l1.8 -5.8 M1186.2 287.2l5.4 1.9 M1176.8 295.3l0.5 -1.7 M1161.6 296.5l2.7 1.0 M1068.1 259.4l3.1 1.1 M1153.5 287.2l0.6 -2.0 M1052.4 227.3l2.5 0.9 M1103.9 265.7l1.0 -3.2 M1269.4 294.1l0.9 -2.8 M1047.6 228.7l6.2 2.2 M1217.4 300.3l0.5 -1.4 M1157.2 289.0l5.8 2.1 M1165.1 291.1l1.6 -5.1 M1074.5 261.7l4.4 1.5 M1099.2 270.3l1.5 -4.8 M1169.4 288.8l5.0 1.8 M1192.6 310.1l1.0 -3.0 M1232.6 298.1l5.8 2.1 M1227.1 307.1l5.5 1.9 M1073.5 254.7l0.5 -1.4 M1149.5 270.0l1.5 -4.8 M1227.6 310.3l1.0 -3.2 M1053.6 231.4l1.2 -3.8 M1168.5 274.6l6.1 2.2 M1071.1 261.3l5.4 1.9 M1061.6 233.5l0.5 -1.5 M1177.7 285.1l0.6 -1.9 M1191.4 303.2l1.2 -3.8 M1098.1 271.2l0.7 -2.1 M1221.6 313.9l5.0 1.8 M1238.8 286.1l1.1 -3.4 M1163.2 287.7l5.2 1.8 M1094.2 261.6l1.9 -6.1 M1251.0 299.8l0.5 -1.7 M1262.6 292.9l1.1 -3.4 M1131.3 262.7l1.1 -3.5 M1012.8 247.2l1.6 -5.1 M1197.8 282.3l5.7 2.0 M1183.2 297.1l0.9 -2.7 M1247.2 300.3l4.0 1.4 M1242.0 312.5l4.6 1.6 M1194.4 271.5l2.7 1.0 M1157.6 287.6l2.1 0.7 M1133.8 275.1l0.6 -1.8 M1231.5 298.6l4.6 1.6 M1202.6 294.6l4.4 1.6 M1109.5 268.4l3.9 1.4 M1164.3 297.6l5.6 2.0 M1172.6 280.5l6.2 2.2 M1205.4 302.8l5.6 2.0 M1039.3 240.9l5.0 1.8 M1108.8 244.5l2.2 0.8 M1132.7 262.9l1.7 -5.5 M1171.9 274.9l5.1 1.8 M1224.3 295.6l0.6 -2.0 M1020.5 220.8l1.2 -3.8 M1173.6 288.8l1.8 -5.6 M1132.5 270.2l4.9 1.7 M1138.1 267.2l0.9 -3.0 M1230.0 301.3l2.3 0.8 M1074.0 246.5l0.6 -1.8 M1130.9 257.7l6.1 2.1 M1157.0 255.6l0.5 -1.7 M1172.9 268.3l1.3 -4.0 M1165.2 280.9l3.3 1.2 M1176.3 294.0l1.5 -4.6 M1052.8 245.6l1.3 -4.1 M1249.5 289.6l1.1 -3.5 M1251.6 315.8l5.4 1.9 M1133.5 253.0l3.9 1.4 M1243.9 302.1l1.9 -6.1 M1133.1 280.6l1.2 -3.9 M1075.1 263.2l4.4 1.5 M1260.0 302.0l1.1 -3.4 M1122.0 252.5l0.9 -2.9 M1184.1 276.4l1.2 -3.8 M1110.3 255.6l1.9 -6.2 M1129.8 279.5l5.1 1.8 M1047.0 253.1l1.7 -5.3 M1208.9 307.4l5.2 1.8 M1200.4 294.3l2.7 1.0 M1242.4 301.2l3.6 1.3 M1051.4 226.2l6.1 2.1 M1178.4 289.8l1.8 -5.8 M1130.3 255.0l0.9 -2.9 M1249.8 313.2l2.6 0.9 M1197.0 299.9l5.7 2.0 M1211.8 302.7l3.2 1.1 M1245.7 316.2l0.6 -2.0 M1132.4 268.2l0.6 -2.0 M1119.5 271.4l2.8 1.0 M1035.8 227.6l0.7 -2.2 M1047.4 252.3l2.1 0.7 M1236.7 288.4l1.0 -3.1 M1147.0 252.3l1.9 -5.9 M1094.2 253.9l4.9 1.7 M1241.8 301.0l0.8 -2.6 M1102.7 239.8l1.2 -3.9 M1115.2 250.7l1.4 -4.5 M1114.0 262.7l0.7 -2.3 M1124.7 255.6l4.2 1.5 M1154.9 280.1l2.9 1.0 M1072.2 237.3l1.1 -3.3 M1227.6 289.2l2.1 0.7 M1033.6 229.5l3.1 1.1 M1199.7 281.0l5.5 1.9 M1178.1 293.1l1.8 -5.8 M1190.4 302.2l2.2 0.8 M1111.8 261.8l0.9 -2.9 M1092.4 242.1l4.9 1.7 M1152.1 266.4l0.5 -1.4 M1210.0 299.0l1.7 -5.5 M1028.9 239.8l5.3 1.9 M1249.3 294.2l4.8 1.7 M1220.8 283.3l0.6 -1.9 M1157.0 261.6l1.6 -4.9 M1186.1 284.3l4.8 1.7 M1176.3 262.6l5.1 1.8 M1211.5 280.8l1.3 -4.0 M1190.7 284.2l1.7 0.6 M1132.4 278.7l0.7 -2.1 M1188.1 295.5l3.9 1.4 M1241.2 309.6l5.7 2.0 M1169.3 291.0l1.3 -4.0 M1084.1 246.5l1.1 -3.6 M1215.1 310.1l3.2 1.1 M1035.4 241.5l4.8 1.7 M1056.1 249.4l3.2 1.1 M1031.9 259.0l5.1 1.8 M1219.5 279.6l2.0 0.7 M1137.1 283.1l0.5 -1.5 M1194.7 289.0l4.6 1.6 M1089.8 264.0l1.6 -5.1 M1104.3 273.1l1.7 -5.4 M1087.4 245.2l5.0 1.8 M1093.4 240.5l1.0 -3.2 M1141.4 255.8l0.5 -1.6 M1197.1 279.9l1.8 -5.7 M1159.7 274.5l0.9 -2.8 M1055.4 231.5l1.1 -3.5 M1039.4 254.9l0.7 -2.3 M1021.3 220.7l5.2 1.8 M1115.2 256.4l3.5 1.2 M1152.4 272.0l5.8 2.0 M1111.9 264.6l3.1 1.1 M1046.2 246.0l1.9 -6.0 M1257.2 296.6h2.2v3.4h-1.5z M1093.4 249.4h1.6v2.7h-1.5z M1251.6 311.4h1.6v2.0h-1.5z M1230.9 318.0h2.4v2.3h-1.5z M1105.2 251.6h2.2v2.2h-1.5z M1202.9 289.0h1.2v1.5h-1.5z M1247.1 301.8h2.7v1.8h-1.5z M1105.4 255.7h2.0v2.7h-1.5z M1147.2 266.9h2.0v2.8h-1.5z M1095.4 255.5h1.9v3.6h-1.5z M1210.3 289.1h1.2v4.0h-1.5z M1214.5 315.8h1.8v1.5h-1.5z M1254.8 310.5h1.3v3.3h-1.5z M1078.9 259.7h1.0v2.8h-1.5z M1135.7 279.9h1.9v3.7h-1.5z M1224.8 285.7h2.8v3.6h-1.5z M1136.8 258.7h2.5v3.0h-1.5z M1227.2 314.8h2.5v3.8h-1.5z M1212.7 315.3h1.2v2.6h-1.5z M1224.4 319.7h2.4v1.8h-1.5z M1134.9 275.0h2.2v1.3h-1.5z M1048.6 258.8h1.4v2.7h-1.5z M1165.0 271.0h1.3v3.6h-1.5z M1207.8 289.8h2.9v1.0h-1.5z M1159.4 291.9h2.7v3.4h-1.5z M1063.2 261.1h2.4v2.2h-1.5z M1182.5 302.9h1.8v3.6h-1.5z M1199.5 306.8h1.4v3.7h-1.5z M1195.6 305.2h1.7v2.4h-1.5z M1204.3 296.1h1.0v2.7h-1.5z M1153.8 294.8h3.0v1.1h-1.5z M1127.9 257.9h1.5v2.5h-1.5z M1155.4 274.0h2.9v4.0h-1.5z M1073.5 248.9h2.7v3.3h-1.5z M1219.3 291.4h1.6v3.4h-1.5z M1256.9 295.2h1.6v3.3h-1.5z M1228.8 302.4h1.7v2.7h-1.5z M1168.1 296.8h1.6v4.0h-1.5z M1189.6 290.9h1.5v2.0h-1.5z M1104.6 282.7h1.9v2.3h-1.5z M1200.6 296.4h1.1v1.9h-1.5z M1170.0 272.8h2.9v2.0h-1.5z M1251.4 301.6h1.4v2.7h-1.5z M1251.5 317.6h1.9v3.6h-1.5z M1091.7 259.4h1.6v1.8h-1.5z M1052.3 252.6h2.4v1.7h-1.5z M1171.2 294.9h2.7v2.9h-1.5z M1144.5 268.0h2.2v1.2h-1.5z M1248.0 291.3h1.3v1.6h-1.5z M1213.2 282.4h2.8v1.6h-1.5z M1174.3 274.3h1.8v3.0h-1.5z M1155.7 293.5h1.1v2.9h-1.5z M1168.2 282.0h1.5v2.4h-1.5z M1064.6 229.1h3.0v1.2h-1.5z M1219.4 287.5h1.2v1.5h-1.5z M1129.7 252.9h2.6v2.3h-1.5z M1204.8 290.3h2.3v2.8h-1.5z M1174.8 271.0h2.4v3.3h-1.5z M1227.2 311.2h3.0v2.4h-1.5z M1157.6 280.7h1.3v1.0h-1.5z M1197.4 287.2h1.7v4.0h-1.5z M1153.1 261.3h1.1v1.4h-1.5z M1088.3 254.1h1.4v3.8h-1.5z M1163.6 290.1h2.5v3.8h-1.5z M1113.6 284.0h1.5v3.9h-1.5z M1200.4 284.7h2.6v2.4h-1.5z M1178.4 264.1h2.5v1.2h-1.5z M1213.9 303.9h1.1v2.7h-1.5z M1194.6 277.4h2.3v1.7h-1.5z M1143.9 281.4h1.5v1.6h-1.5z" fill="#d07f10" stroke="#c8780c" stroke-width="0.8" opacity="0.7"/><path d="M1168 258 L1196 264 L1190 273 L1162 267 Z" fill="#6c6c6c"/></g><path d="M992 236 L1228 321" stroke="#c97a10" stroke-width="2"/><path d="M1228 321 L1260 282" stroke="#b3781f" stroke-width="1.2"/><path d="M992.0 205.0 L1130.0 168.0 L1293.0 195.0 L1290.0 206.0 L1145.0 185.0 L1097.0 198.0 L1176.0 222.0 L1157.0 235.0 L1243.0 262.0 L1240.0 274.0 Z" fill="#c97b0e"/><g clip-path="url(#cTop)"><path d="M996.2 203.9l289.2 79.2 M1012.8 199.4l289.2 79.2 M1028.1 195.3l289.2 79.2 M1049.2 189.7l289.2 79.2 M1062.2 186.2l289.2 79.2 M1081.4 181.0l289.2 79.2 M1096.4 177.0l289.2 79.2 M1117.5 171.3l289.2 79.2 M1134.8 166.7l289.2 79.2 M994.0 205.5l144.9 -38.9 M1016.7 211.8l144.9 -38.9 M1036.3 217.1l144.9 -38.9 M1051.3 221.3l144.9 -38.9 M1070.8 226.6l144.9 -38.9 M1091.0 232.1l144.9 -38.9 M1113.1 238.2l144.9 -38.9 M1126.7 241.9l144.9 -38.9 M1149.7 248.2l144.9 -38.9 M1168.1 253.3l144.9 -38.9 M1186.1 258.2l144.9 -38.9 M1206.2 263.7l144.9 -38.9 M1227.5 269.6l144.9 -38.9 M1241.6 273.4l144.9 -38.9" stroke="#8a7a66" stroke-width="1.3" opacity="0.7" fill="none"/><path d="M1260.1 204.6h6.7v3.6h-6.7z M1049.7 260.0h8.0v1.9h-8.0z M1002.3 177.3h7.8v1.0h-7.8z M1268.5 181.6h6.4v1.3h-6.4z M1045.6 240.1h2.5v2.0h-2.5z M1270.6 243.8h7.3v3.9h-7.3z M1004.9 190.8h6.8v3.1h-6.8z M1006.4 220.5h3.4v2.3h-3.4z M1026.5 167.2h7.9v1.9h-7.9z M1258.6 178.3h4.9v1.4h-4.9z M1123.5 184.7h6.1v1.4h-6.1z M1216.5 220.1h2.7v2.1h-2.7z M1143.9 266.1h4.1v1.6h-4.1z M1285.3 262.1h6.4v1.8h-6.4z M1048.2 194.1h2.4v1.1h-2.4z M1147.6 209.9h5.3v2.1h-5.3z M998.2 240.7h5.9v2.6h-5.9z M1159.6 240.9h7.9v3.6h-7.9z M1210.3 208.9h3.9v2.3h-3.9z M1286.9 207.6h4.3v2.2h-4.3z M1037.9 274.8h2.0v2.8h-2.0z M1272.9 193.0h5.7v2.1h-5.7z M1067.2 186.8h2.7v3.5h-2.7z M1230.2 264.9h2.3v3.1h-2.3z M1092.3 236.1h5.3v1.9h-5.3z M1286.5 165.1h6.5v3.6h-6.5z M1148.0 230.2h8.0v1.7h-8.0z M1183.9 246.8h4.3v3.1h-4.3z M1113.1 222.9h5.7v3.0h-5.7z M1091.6 234.2h5.3v1.7h-5.3z M1178.8 194.1h7.5v2.4h-7.5z M1211.5 222.4h4.9v1.7h-4.9z M1037.6 267.0h5.2v2.6h-5.2z M1153.2 254.5h3.4v1.5h-3.4z M1241.6 215.6h5.8v3.5h-5.8z M1263.2 260.5h2.3v2.1h-2.3z M1244.6 255.0h2.7v1.5h-2.7z M1070.4 176.3h4.1v3.4h-4.1z M1151.4 214.8h2.5v2.2h-2.5z M1294.1 241.5h4.7v2.4h-4.7z M1234.5 248.5h2.9v3.0h-2.9z M1105.1 222.3h3.4v2.1h-3.4z M1097.0 206.9h2.1v1.6h-2.1z M1166.2 171.4h3.1v3.2h-3.1z M1077.4 200.6h3.5v3.5h-3.5z M1022.4 235.0h7.2v1.6h-7.2z M1121.9 252.2h5.7v2.1h-5.7z M1008.2 213.7h4.2v3.1h-4.2z M1083.6 209.9h5.9v3.4h-5.9z M1100.7 207.4h5.5v3.8h-5.5z M1052.5 271.9h6.3v2.1h-6.3z M1194.7 201.2h2.4v3.3h-2.4z M1108.8 222.8h5.0v3.7h-5.0z M1222.1 167.8h5.6v2.4h-5.6z M1133.7 257.4h4.5v2.4h-4.5z M1262.1 213.4h4.9v2.5h-4.9z M1242.4 238.7h6.4v2.2h-6.4z M1007.2 239.8h5.3v3.3h-5.3z M1226.0 178.0h3.3v1.2h-3.3z M1240.2 176.2h2.5v3.3h-2.5z M1164.3 171.1h6.1v3.1h-6.1z M1139.8 171.0h6.1v2.3h-6.1z M1170.2 274.8h6.9v3.6h-6.9z M1038.7 201.8h5.1v1.0h-5.1z M1291.6 195.2h3.6v1.9h-3.6z M1071.5 259.5h5.3v2.5h-5.3z M1121.1 170.6h3.8v3.6h-3.8z M1235.6 259.2h3.5v1.6h-3.5z M1010.6 224.1h4.2v2.4h-4.2z M1141.7 229.2h4.2v3.4h-4.2z M1055.1 266.1h5.3v1.2h-5.3z M1089.3 223.6h4.5v2.7h-4.5z M1092.1 195.1h6.8v1.9h-6.8z M1208.2 253.3h5.6v2.4h-5.6z M1275.5 213.9h7.3v1.2h-7.3z M1125.1 235.3h2.3v3.6h-2.3z M1016.6 230.6h3.1v3.8h-3.1z M1163.3 253.1h5.0v3.0h-5.0z M1197.5 197.4h3.3v3.5h-3.3z M1038.7 266.0h3.2v1.3h-3.2z M1023.6 251.3h7.7v2.2h-7.7z M1192.7 193.3h7.4v3.1h-7.4z M1041.5 171.2h6.2v1.1h-6.2z M1245.8 197.3h3.4v2.7h-3.4z M1090.6 226.7h2.9v3.7h-2.9z M1092.3 257.5h2.9v3.4h-2.9z M1289.0 208.1h2.2v2.1h-2.2z M1187.2 189.6h5.3v1.3h-5.3z M1134.3 245.1h4.6v3.0h-4.6z M1029.3 256.1h2.7v3.8h-2.7z" fill="#867866" opacity="0.55"/><path d="M1097 198 L1145 185 L1160 190 L1120 205 Z" fill="#9d8468" opacity="0.8"/></g><path d="M992.0 205.0 L1240.0 274.0 L1240.0 283.0 L992.0 214.0 Z" fill="#a87838"/><path d="M994.1 206.6v7.9 M997.3 207.5v6.6 M1001.1 208.5v7.5 M1005.7 209.8v7.9 M1009.0 210.7v7.0 M1014.8 212.4v7.2 M1018.4 213.3v6.2 M1021.7 214.3v6.5 M1027.5 215.9v7.7 M1030.3 216.7v7.8 M1034.1 217.7v7.2 M1040.3 219.4v6.7 M1044.4 220.6v7.3 M1046.7 221.2v6.7 M1051.8 222.6v6.5 M1056.6 224.0v6.4 M1060.9 225.2v6.6 M1063.6 225.9v7.1 M1067.9 227.1v7.1 M1073.5 228.7v7.2 M1077.0 229.7v6.1 M1081.4 230.9v6.2 M1085.8 232.1v6.3 M1089.9 233.2v6.7 M1093.7 234.3v7.3 M1097.4 235.3v6.3 M1103.3 237.0v6.7 M1107.3 238.1v7.7 M1110.7 239.0v6.3 M1114.1 240.0v7.8 M1118.3 241.2v7.0 M1123.4 242.6v6.2 M1127.5 243.7v6.3 M1131.8 244.9v7.0 M1135.7 246.0v6.4 M1140.0 247.2v6.4 M1143.6 248.2v6.5 M1149.4 249.8v7.0 M1153.6 251.0v6.0 M1157.9 252.2v7.0 M1161.8 253.2v7.1 M1165.8 254.4v6.5 M1170.1 255.6v6.3 M1173.3 256.4v6.1 M1177.8 257.7v7.0 M1181.8 258.8v7.8 M1185.5 259.8v7.2 M1190.1 261.1v7.2 M1195.4 262.6v7.4 M1198.1 263.3v6.5 M1203.4 264.8v8.0 M1206.5 265.7v7.2 M1212.0 267.2v7.6 M1215.5 268.2v7.6 M1220.0 269.4v7.8 M1223.2 270.3v7.9 M1228.3 271.7v6.8 M1231.8 272.7v6.5 M1237.3 274.3v7.4" stroke="#75604c" stroke-width="1.1" opacity="0.75"/><path d="M992 205.8 L1240 274.8" stroke="#b86f08" stroke-width="1.8"/><path d="M992 214 L1240 283" stroke="#a8702c" stroke-width="1.2"/><path d="M1157.0 235.0 L1243.0 262.0 L1243.0 271.0 L1157.0 244.0 Z" fill="#a87838"/><path d="M1157.3 236.1v6.7 M1161.6 237.4v6.4 M1166.1 238.8v6.7 M1172.0 240.7v8.0 M1175.9 241.9v7.0 M1179.6 243.1v7.6 M1184.8 244.7v7.5 M1188.5 245.9v6.4 M1192.7 247.2v7.7 M1197.4 248.7v6.2 M1201.5 250.0v6.7 M1204.6 251.0v7.9 M1210.0 252.7v7.5 M1213.2 253.6v7.7 M1219.2 255.5v7.8 M1223.1 256.8v7.7 M1227.5 258.1v7.2 M1231.0 259.2v7.7 M1236.1 260.8v7.7 M1239.3 261.9v7.9" stroke="#75604c" stroke-width="1.1" opacity="0.75"/><path d="M1157 235.8 L1243 262.8" stroke="#b86f08" stroke-width="1.8"/><path d="M1157 244 L1243 271" stroke="#a8702c" stroke-width="1.2"/><path d="M1150 200 L1280 220 M1170 215 L1260 240 M1190 228 L1250 250 M1200 190 L1240 250" stroke="#7d7b79" stroke-width="1" opacity="0.7"/><path d="M1211 275 l8 2" stroke="#2c2" stroke-width="1.2"/><path d="M1211 275 v-9" stroke="#44f" stroke-width="1.2"/><path d="M1211 275 l-4 3" stroke="#e22" stroke-width="1.2"/></svg>
<svg style="left:1021.2px;top:145.2px" width="56" height="66.3" viewBox="1021.2 145.2 56 66.3"><path d="M1049.20 207.50 L1032.06 189.71 A23.8 23.8 0 1 1 1066.34 189.71 Z" fill="#f00" stroke="#fff" stroke-width="2.2" stroke-linejoin="round"/></svg>
<div class="t" style="left:1039.22px;top:168.00px;font-size:14.8px;color:#fff;font-weight:bold;letter-spacing:-0.700px;font-family:'Liberation Serif'">P-4</div>
<svg style="left:1211.2px;top:123.2px" width="56" height="65.8" viewBox="1211.2 123.2 56 65.8"><path d="M1239.20 185.00 L1222.30 167.96 A23.8 23.8 0 1 1 1256.10 167.96 Z" fill="#f00" stroke="#fff" stroke-width="2.2" stroke-linejoin="round"/></svg>
<div class="t" style="left:1229.22px;top:146.00px;font-size:14.8px;color:#fff;font-weight:bold;letter-spacing:-0.700px;font-family:'Liberation Serif'">P-4</div>
<svg style="left:1215.0px;top:205.0px" width="56" height="65.7" viewBox="1215.0 205.0 56 65.7"><path d="M1243.00 266.70 L1226.15 249.81 A23.8 23.8 0 1 1 1259.85 249.81 Z" fill="#f00" stroke="#fff" stroke-width="2.2" stroke-linejoin="round"/></svg>
<div class="t" style="left:1233.02px;top:227.80px;font-size:14.8px;color:#fff;font-weight:bold;letter-spacing:-0.700px;font-family:'Liberation Serif'">P-3</div>
<svg style="left:1279.0px;top:186.2px" width="56" height="67.4" viewBox="1279.0 186.2 56 67.4"><path d="M1307.00 249.60 L1289.38 230.20 A23.8 23.8 0 1 1 1324.62 230.20 Z" fill="#f00" stroke="#fff" stroke-width="2.2" stroke-linejoin="round"/></svg>
<div class="t" style="left:1293.67px;top:209.00px;font-size:14.8px;color:#fff;font-weight:bold;letter-spacing:-0.700px;font-family:'Liberation Serif'">P-12</div>
<svg style="left:0;top:0" width="1842" height="818"><path d="M1374.9 85.3L1413.8 80.4L1453.5 84.7L1417.5 92z" fill="#fafafa" stroke="#333" stroke-width="1"/><path d="M1374.9 85.3L1417.5 92L1417.5 156.2L1379.6 134.8z" fill="#fff" stroke="#333" stroke-width="1"/><path d="M1417.5 92L1453.5 84.7L1449.2 133L1417.5 156.2z" fill="#fdfdfd" stroke="#333" stroke-width="1"/><path d="M1426 103L1448 96L1446 130L1425.5 141z" fill="#c4c4c4"/><text x="0" y="0" font-family="Liberation Sans" font-size="12" fill="#8a8a8a" transform="translate(1385 121) rotate(16) scale(0.6 1.15)">Справа</text><text x="0" y="0" font-family="Liberation Sans" font-size="13" fill="#3a3a3a" transform="translate(1428 131) rotate(-24) scale(0.52 1.25)">Сзади</text></svg>
<!-- TABLE -->
<div class="a" style="left:669px;top:425px;width:813px;height:39px;background:#545454;"></div>
<div class="a" style="left:669px;top:464px;width:813px;height:33px;background:#686868;"></div>
<div class="a" style="left:669px;top:464px;width:60px;height:33px;background:#fff;"></div>
<div class="a" style="left:669px;top:497px;width:805px;height:309px;background:#fff;"></div>
<div class="a" style="left:669px;top:806px;width:805px;height:8px;background:#3b8fb0;"></div>
<div class="a" style="left:1474px;top:464px;width:8px;height:342px;background:#5e5e5e;"></div>
<div class="a" style="left:1474px;top:465px;width:8px;height:7px;background:#3b8fb0;"></div>
<svg style="left:685px;top:441px" width="16" height="14" viewBox="0 0 16 14"><path d="M0 1h13M0 4.8h13M0 8.6h13" stroke="#e2e2e2" stroke-width="1.8"/><path d="M11 9v5l4.5-2.5z" fill="#e2e2e2"/></svg>
<div class="a" style="left:1052px;top:429px;width:48px;height:3px;background:#3a96bf;"></div>
<svg style="left:1311px;top:437px" width="20" height="20" viewBox="0 0 20 20"><path d="M9.5 12.5H3.2a2 2 0 0 1-2-2V3.3a2 2 0 0 1 2-2h7.6a2 2 0 0 1 2 2V9" fill="none" stroke="#e2e2e2" stroke-width="1.3"/><path d="M9 6.8h7.8a2 2 0 0 1 2 2v7.5a2 2 0 0 1-2 2H8.5a2 2 0 0 1-2-2v-5" fill="none" stroke="#e2e2e2" stroke-width="1.3"/><path d="M6.3 9.8V8.5a2 2 0 0 1 2-2" fill="none" stroke="#e2e2e2" stroke-width="1.3"/><path d="M12.8 9.5v1a2 2 0 0 1-2 2" fill="none" stroke="#e2e2e2" stroke-width="1.3"/></svg>
<svg style="left:1348px;top:439px" width="16" height="19" viewBox="0 0 16 19"><path d="M1 2h14M1 17h14" stroke="#e2e2e2" stroke-width="2"/><path d="M8 4.5v10" stroke="#e2e2e2" stroke-width="1.6"/><path d="M4.5 7.5L8 4l3.5 3.5zM4.5 11.5L8 15l3.5-3.5z" fill="#e2e2e2"/></svg>
<svg style="left:1382px;top:438px" width="16" height="20" viewBox="0 0 16 20"><path d="M1 8.5h14M1 11h14" stroke="#e2e2e2" stroke-width="1.5"/><path d="M8 1v5M8 14v5" stroke="#e2e2e2" stroke-width="1.6"/><path d="M4.5 4.5L8 8l3.5-3.5zM4.5 15.5L8 12l3.5 3.5z" fill="#e2e2e2"/></svg>
<svg style="left:1415px;top:439px" width="18" height="18" viewBox="0 0 18 18"><path fill="#e2e2e2" fill-rule="evenodd" d="M7.4 0h3.2l.4 2.4c.6.2 1.1.5 1.6.8l2.2-1 1.6 2.8-1.9 1.5c.1.5.1 1.1 0 1.6l1.9 1.5-1.6 2.8-2.2-1c-.5.3-1 .6-1.6.8l-.4 2.4H7.4L7 12.4c-.6-.2-1.1-.5-1.6-.8l-2.2 1-1.6-2.8 1.9-1.5c-.1-.5-.1-1.1 0-1.6L1.6 5.2l1.6-2.8 2.2 1c.5-.3 1-.6 1.6-.8zM9 5.4a2.7 2.7 0 1 0 0 5.4a2.7 2.7 0 1 0 0-5.4z" transform="translate(0 1)"/></svg>
<svg style="left:1452px;top:444px" width="12" height="8" viewBox="0 0 12 8"><path d="M1 1.2L6 6.3L11 1.2" fill="none" stroke="#e2e2e2" stroke-width="1.8"/></svg>
<div class="t" style="left:939.94px;top:474.14px;font-size:12px;color:#dedede;font-weight:bold">Раздел</div>
<div class="t" style="left:1094.22px;top:474.14px;font-size:12px;color:#dedede;font-weight:bold;letter-spacing:-0.189px">Элемент (Модель А)</div>
<div class="t" style="left:1294.22px;top:474.14px;font-size:12px;color:#dedede;font-weight:bold;letter-spacing:-0.225px">Элемент (Модель B)</div>
<div class="a" style="left:687px;top:472.5px;width:15.5px;height:15.5px;background:#3d8fb3;border-radius:2px"></div>
<div class="a" style="left:690px;top:479.25px;width:9.5px;height:2px;background:#fff"></div>
<div class="a" style="left:687px;top:505.5px;width:15.5px;height:15.5px;background:#8a8a8a;border-radius:2px"></div>
<div class="a" style="left:690px;top:512.25px;width:9.5px;height:2px;background:#fff"></div>
<div class="a" style="left:669px;top:528px;width:805px;height:278px;overflow:hidden">
<div class="a" style="left:0;top:0px;width:805px;height:32px;background:#efefef;border-top:1px solid #dcdcdc"></div>
<div class="a" style="left:0;top:32px;width:805px;height:32px;background:#fff;border-top:1px solid #dcdcdc"></div>
<div class="a" style="left:0;top:64px;width:805px;height:32px;background:#efefef;border-top:1px solid #dcdcdc"></div>
<div class="a" style="left:0;top:96px;width:805px;height:32px;background:#fff;border-top:1px solid #dcdcdc"></div>
<div class="a" style="left:0;top:128px;width:805px;height:32px;background:#efefef;border-top:1px solid #dcdcdc"></div>
<div class="a" style="left:0;top:160px;width:805px;height:32px;background:#fff;border-top:1px solid #dcdcdc"></div>
<div class="a" style="left:0;top:192px;width:805px;height:32px;background:#efefef;border-top:1px solid #dcdcdc"></div>
<div class="a" style="left:0;top:224px;width:805px;height:32px;background:#fff;border-top:1px solid #dcdcdc"></div>
<div class="a" style="left:0;top:256px;width:805px;height:32px;background:#efefef;border-top:1px solid #dcdcdc"></div>
</div>
<div class="a" style="left:669px;top:528px;width:805px;height:278px;overflow:hidden">
<div class="a" style="left:18px;top:10.0px;width:15.5px;height:15.5px;border-radius:2px;background:#3d8fb3"></div>
<svg style="left:18px;top:10.0px" width="15.5" height="15.5" viewBox="0 0 12 12"><path d="M2.3 6.3l2.4 2.4L9.8 3.6" fill="none" stroke="#fff" stroke-width="1.3"/></svg>
<div class="a" style="left:18px;top:42.0px;width:15.5px;height:15.5px;border-radius:2px;background:#fff;border:2px solid #8c8c8c"></div>
<div class="a" style="left:18px;top:74.0px;width:15.5px;height:15.5px;border-radius:2px;background:#3d8fb3"></div>
<svg style="left:18px;top:74.0px" width="15.5" height="15.5" viewBox="0 0 12 12"><path d="M2.3 6.3l2.4 2.4L9.8 3.6" fill="none" stroke="#fff" stroke-width="1.3"/></svg>
<div class="a" style="left:18px;top:106.0px;width:15.5px;height:15.5px;border-radius:2px;background:#3d8fb3"></div>
<svg style="left:18px;top:106.0px" width="15.5" height="15.5" viewBox="0 0 12 12"><path d="M2.3 6.3l2.4 2.4L9.8 3.6" fill="none" stroke="#fff" stroke-width="1.3"/></svg>
<div class="a" style="left:18px;top:138.0px;width:15.5px;height:15.5px;border-radius:2px;background:#3d8fb3"></div>
<svg style="left:18px;top:138.0px" width="15.5" height="15.5" viewBox="0 0 12 12"><path d="M2.3 6.3l2.4 2.4L9.8 3.6" fill="none" stroke="#fff" stroke-width="1.3"/></svg>
<div class="a" style="left:18px;top:170.0px;width:15.5px;height:15.5px;border-radius:2px;background:#fff;border:2px solid #8c8c8c"></div>
<div class="a" style="left:18px;top:202.0px;width:15.5px;height:15.5px;border-radius:2px;background:#3d8fb3"></div>
<svg style="left:18px;top:202.0px" width="15.5" height="15.5" viewBox="0 0 12 12"><path d="M2.3 6.3l2.4 2.4L9.8 3.6" fill="none" stroke="#fff" stroke-width="1.3"/></svg>
<div class="a" style="left:18px;top:234.0px;width:15.5px;height:15.5px;border-radius:2px;background:#fff;border:2px solid #8c8c8c"></div>
<div class="a" style="left:18px;top:266.0px;width:15.5px;height:15.5px;border-radius:2px;background:#fff;border:2px solid #8c8c8c"></div>
</div>
<div class="t" style="left:745.48px;top:538.30px;font-size:13px;color:#444;letter-spacing:0.491px">Общее пересечение</div>
<div class="t" style="left:941.38px;top:538.30px;font-size:13px;color:#444;letter-spacing:0.134px">AP - BK</div>
<div class="t" style="left:1095.08px;top:538.30px;font-size:13px;color:#444;letter-spacing:0.420px;width:183.5px;overflow:hidden;padding-bottom:5px">Перекрытие:ADSK_Перекрытие</div>
<div class="t" style="left:1295.08px;top:538.30px;font-size:13px;color:#444;letter-spacing:0.550px;width:178.4px;overflow:hidden;padding-bottom:5px">Типы трубопроводов:ADSK_Трубопровод</div>
<div class="t" style="left:745.48px;top:570.30px;font-size:13px;color:#444;letter-spacing:0.491px">Общее пересечение</div>
<div class="t" style="left:941.38px;top:570.30px;font-size:13px;color:#444;letter-spacing:0.134px">AP - BK</div>
<div class="t" style="left:1095.08px;top:570.30px;font-size:13px;color:#444;letter-spacing:0.420px;width:183.5px;overflow:hidden;padding-bottom:5px">Базовая стена:ADSK_Внутренняя</div>
<div class="t" style="left:1295.08px;top:570.30px;font-size:13px;color:#444;letter-spacing:0.550px;width:178.4px;overflow:hidden;padding-bottom:5px">Гибкий трубопровод круглый</div>
<div class="t" style="left:745.48px;top:602.30px;font-size:13px;color:#444;letter-spacing:0.491px">Общее пересечение</div>
<div class="t" style="left:941.38px;top:602.30px;font-size:13px;color:#444;letter-spacing:0.134px">AP - BK</div>
<div class="t" style="left:1095.08px;top:602.30px;font-size:13px;color:#444;letter-spacing:0.420px;width:183.5px;overflow:hidden;padding-bottom:5px">Базовая стена:ADSK_Внутренняя</div>
<div class="t" style="left:1295.08px;top:602.30px;font-size:13px;color:#444;letter-spacing:0.550px;width:178.4px;overflow:hidden;padding-bottom:5px">Типы трубопроводов:ADSK_Трубопровод</div>
<div class="t" style="left:745.48px;top:634.30px;font-size:13px;color:#444;letter-spacing:0.491px">Общее пересечение</div>
<div class="t" style="left:941.38px;top:634.30px;font-size:13px;color:#444;letter-spacing:0.134px">AP - BK</div>
<div class="t" style="left:1095.08px;top:634.30px;font-size:13px;color:#444;letter-spacing:0.420px;width:183.5px;overflow:hidden;padding-bottom:5px">Перекрытие:ADSK_Перекрытие</div>
<div class="t" style="left:1295.08px;top:634.30px;font-size:13px;color:#444;letter-spacing:0.550px;width:178.4px;overflow:hidden;padding-bottom:5px">Типы трубопроводов:ADSK_Трубопровод</div>
<div class="t" style="left:745.48px;top:666.30px;font-size:13px;color:#444;letter-spacing:0.491px">Общее пересечение</div>
<div class="t" style="left:941.38px;top:666.30px;font-size:13px;color:#444;letter-spacing:0.134px">AP - BK</div>
<div class="t" style="left:1095.08px;top:666.30px;font-size:13px;color:#444;letter-spacing:0.420px;width:183.5px;overflow:hidden;padding-bottom:5px">Перекрытие:ADSK_Кровля:9</div>
<div class="t" style="left:1295.08px;top:666.30px;font-size:13px;color:#444;letter-spacing:0.550px;width:178.4px;overflow:hidden;padding-bottom:5px">Типы трубопроводов:ADSK_Трубопровод</div>
<div class="t" style="left:745.48px;top:698.30px;font-size:13px;color:#444;letter-spacing:0.491px">Общее пересечение</div>
<div class="t" style="left:941.38px;top:698.30px;font-size:13px;color:#444;letter-spacing:0.134px">AP - BK</div>
<div class="t" style="left:1095.08px;top:698.30px;font-size:13px;color:#444;letter-spacing:0.420px;width:183.5px;overflow:hidden;padding-bottom:5px">Перекрытие:ADSK_Кровля:9</div>
<div class="t" style="left:1295.08px;top:698.30px;font-size:13px;color:#444;letter-spacing:0.550px;width:178.4px;overflow:hidden;padding-bottom:5px">Типы трубопроводов:Труба</div>
<div class="t" style="left:745.48px;top:730.30px;font-size:13px;color:#444;letter-spacing:0.491px">Общее пересечение</div>
<div class="t" style="left:941.38px;top:730.30px;font-size:13px;color:#444;letter-spacing:0.134px">AP - BK</div>
<div class="t" style="left:1095.08px;top:730.30px;font-size:13px;color:#444;letter-spacing:0.420px;width:183.5px;overflow:hidden;padding-bottom:5px">Перекрытие:ADSK_Перекрытие</div>
<div class="t" style="left:1295.08px;top:730.30px;font-size:13px;color:#444;letter-spacing:0.550px;width:178.4px;overflow:hidden;padding-bottom:5px">ADSK_ФасоннаяЧасть_ПП_Тройник</div>
<div class="t" style="left:745.48px;top:762.30px;font-size:13px;color:#444;letter-spacing:0.491px">Общее пересечение</div>
<div class="t" style="left:941.38px;top:762.30px;font-size:13px;color:#444;letter-spacing:0.134px">AP - BK</div>
<div class="t" style="left:1095.08px;top:762.30px;font-size:13px;color:#444;letter-spacing:0.420px;width:183.5px;overflow:hidden;padding-bottom:5px">Базовая стена:ADSK_Внутренняя</div>
<div class="t" style="left:1295.08px;top:762.30px;font-size:13px;color:#444;letter-spacing:0.550px;width:178.4px;overflow:hidden;padding-bottom:5px">Типы трубопроводов:ADSK_Трубопровод</div>
<div class="t" style="left:745.48px;top:794.30px;font-size:13px;color:#444;letter-spacing:0.491px">Общее пересечение</div>
<div class="t" style="left:941.38px;top:794.30px;font-size:13px;color:#444;letter-spacing:0.134px">AP - BK</div>
<div class="t" style="left:1095.08px;top:794.30px;font-size:13px;color:#444;letter-spacing:0.420px;width:183.5px;overflow:hidden;padding-bottom:5px">Перекрытие:ADSK_Перекрытие</div>
<div class="t" style="left:1295.08px;top:794.30px;font-size:13px;color:#444;letter-spacing:0.550px;width:178.4px;overflow:hidden;padding-bottom:5px">Типы трубопроводов:ADSK_Трубопровод</div>
<div class="a" style="left:669px;top:806px;width:813px;height:8px;background:#5a5a5a"></div>
<div class="a" style="left:669px;top:806px;width:798px;height:8px;background:#3b8fb0"></div>
<div class="a" style="left:669px;top:814px;width:813px;height:4px;background:#717171"></div>
<div class="a" style="left:729px;top:528px;width:1.2px;height:278px;background:#3a3a3a;"></div>
<div class="a" style="left:925px;top:528px;width:1.2px;height:278px;background:#3a3a3a;"></div>
<div class="a" style="left:1079px;top:528px;width:1.2px;height:278px;background:#3a3a3a;"></div>
<div class="a" style="left:1279px;top:528px;width:1.2px;height:278px;background:#3a3a3a;"></div>
<!-- TASK PANEL -->
<div class="a" style="left:1491px;top:36px;width:307px;height:776px;background:#545454;box-shadow:-3px 0 6px rgba(0,0,0,.25)"></div>
<div class="a" style="left:1785px;top:82px;width:8px;height:720px;background:#686868;"></div>
<div class="a" style="left:1785px;top:229px;width:8px;height:573px;background:#3b8fb0;"></div>
<svg style="left:1502px;top:52px" width="16" height="14" viewBox="0 0 16 14"><path d="M0 1h13M0 4.8h13M0 8.6h13" stroke="#e2e2e2" stroke-width="1.8"/><path d="M11 9v5l4.5-2.5z" fill="#e2e2e2"/></svg>
<div class="t" style="left:1531.22px;top:53.44px;font-size:12px;color:#dcdcdc;letter-spacing:0.199px">ЗАДАЧИ</div>
<svg style="left:1679px;top:52px" width="16" height="16" viewBox="0 0 16 16"><path d="M1 1h14L9.3 8.2V15H6.7V8.2z" fill="none" stroke="#e2e2e2" stroke-width="1.6" stroke-linejoin="round"/><path d="M6.7 8.5h2.6V15H6.7z" fill="#e2e2e2"/></svg>
<svg style="left:1705px;top:52px" width="16" height="16" viewBox="0 0 16 16"><rect x="0.8" y="0.8" width="14.4" height="14.4" fill="none" stroke="#e2e2e2" stroke-width="1.5"/><path d="M3.8 8h8.4M8 3.8v8.4" stroke="#e2e2e2" stroke-width="1.7"/></svg>
<div class="a" style="left:1741px;top:48px;width:24px;height:24px;background:#8a8a8a;"></div>
<svg style="left:1746px;top:52px" width="14" height="16" viewBox="0 0 14 16"><rect x="0.8" y="0.8" width="12.4" height="3.6" rx="1.5" fill="none" stroke="#e2e2e2" stroke-width="1.4"/><rect x="0.8" y="6.2" width="12.4" height="3.6" rx="1.5" fill="none" stroke="#e2e2e2" stroke-width="1.4"/><rect x="0.8" y="11.6" width="12.4" height="3.6" rx="1.5" fill="none" stroke="#e2e2e2" stroke-width="1.4"/></svg>
<svg style="left:1773px;top:52px" width="16" height="16" viewBox="0 0 16 16"><rect x="0.8" y="0.8" width="14.4" height="14.4" fill="none" stroke="#e2e2e2" stroke-width="1.5"/><path d="M1 5.5h14M1 10.3h14M5 1v14" stroke="#e2e2e2" stroke-width="1.3"/></svg>
<div class="a" style="left:1496px;top:90px;width:285px;height:82px;background:#fff;border-radius:6px"></div>
<div class="a" style="left:1504px;top:98px;width:24px;height:24px;border-radius:50%;background:#c2416b;border:1px solid #9a3a5a"></div>
<div class="t" style="left:1512.00px;top:104.34px;font-size:12px;color:#fff">A</div>
<svg style="left:1535.5px;top:102px" width="6" height="16" viewBox="0 0 6 16"><path d="M0 4.5L3 0.5L6 4.5z" fill="#c8c8c8"/><path d="M0 10L3 6L6 10z" fill="#c8c8c8"/><path d="M0 15.5L3 11.5L6 15.5z" fill="#111"/></svg>
<div class="t" style="left:1548.51px;top:103.59px;font-size:12.3px;color:#e8494b;font-weight:bold;letter-spacing:-0.655px">Новая</div>
<div class="t" style="left:1755.01px;top:103.84px;font-size:12px;color:#222;letter-spacing:-0.400px">P-7</div>
<div class="t" style="left:1694.88px;top:105.11px;font-size:10.5px;color:#222;letter-spacing:-0.190px">20.10.2025</div>
<div class="t" style="left:1503.43px;top:131.18px;font-size:14.2px;color:#222">даты и смета-2</div>
<div class="a" style="left:1496px;top:180px;width:285px;height:82px;background:#fff;border-radius:6px"></div>
<div class="a" style="left:1504px;top:188px;width:24px;height:24px;border-radius:50%;background:#c2416b;border:1px solid #9a3a5a"></div>
<div class="t" style="left:1512.00px;top:194.34px;font-size:12px;color:#fff">A</div>
<svg style="left:1535.5px;top:192px" width="6" height="16" viewBox="0 0 6 16"><path d="M0 4.5L3 0.5L6 4.5z" fill="#c8c8c8"/><path d="M0 10L3 6L6 10z" fill="#c8c8c8"/><path d="M0 15.5L3 11.5L6 15.5z" fill="#111"/></svg>
<div class="t" style="left:1548.51px;top:193.59px;font-size:12.3px;color:#e8494b;font-weight:bold;letter-spacing:-0.655px">Новая</div>
<div class="t" style="left:1755.01px;top:193.84px;font-size:12px;color:#222;letter-spacing:-0.400px">P-9</div>
<div class="t" style="left:1694.88px;top:195.11px;font-size:10.5px;color:#222;letter-spacing:-0.190px">20.10.2025</div>
<div class="t" style="left:1503.43px;top:221.18px;font-size:14.2px;color:#222">задача для вложений</div>
<div class="a" style="left:1496px;top:270px;width:285px;height:82px;background:#fff;border-radius:6px"></div>
<div class="a" style="left:1504px;top:278px;width:24px;height:24px;border-radius:50%;background:#c2416b;border:1px solid #9a3a5a"></div>
<div class="t" style="left:1512.00px;top:284.34px;font-size:12px;color:#fff">A</div>
<svg style="left:1535.5px;top:282px" width="6" height="16" viewBox="0 0 6 16"><path d="M0 4.5L3 0.5L6 4.5z" fill="#c8c8c8"/><path d="M0 10L3 6L6 10z" fill="#c8c8c8"/><path d="M0 15.5L3 11.5L6 15.5z" fill="#111"/></svg>
<div class="t" style="left:1548.51px;top:283.59px;font-size:12.3px;color:#e8494b;font-weight:bold;letter-spacing:-0.655px">Новая</div>
<div class="t" style="left:1755.01px;top:283.84px;font-size:12px;color:#222;letter-spacing:-0.400px">P-2</div>
<div class="t" style="left:1694.88px;top:285.11px;font-size:10.5px;color:#222;letter-spacing:-0.190px">20.10.2025</div>
<div class="t" style="left:1503.43px;top:311.18px;font-size:14.2px;color:#222">Задача со скринами</div>
<div class="a" style="left:1496px;top:360px;width:285px;height:82px;background:#fff;border-radius:6px"></div>
<div class="a" style="left:1504px;top:368px;width:24px;height:24px;border-radius:50%;background:#c2416b;border:1px solid #9a3a5a"></div>
<div class="t" style="left:1512.00px;top:374.34px;font-size:12px;color:#fff">A</div>
<svg style="left:1535.5px;top:372px" width="6" height="16" viewBox="0 0 6 16"><path d="M0 4.5L3 0.5L6 4.5z" fill="#c8c8c8"/><path d="M0 10L3 6L6 10z" fill="#c8c8c8"/><path d="M0 15.5L3 11.5L6 15.5z" fill="#111"/></svg>
<div class="t" style="left:1548.51px;top:373.59px;font-size:12.3px;color:#e8494b;font-weight:bold;letter-spacing:-0.655px">Новая</div>
<div class="t" style="left:1755.01px;top:373.84px;font-size:12px;color:#222;letter-spacing:-0.400px">P-3</div>
<div class="t" style="left:1694.88px;top:375.11px;font-size:10.5px;color:#222;letter-spacing:-0.190px">20.10.2025</div>
<div class="t" style="left:1503.43px;top:401.18px;font-size:14.2px;color:#222">Задача с метками</div>
<div class="a" style="left:1496px;top:450px;width:285px;height:82px;background:#fff;border-radius:6px"></div>
<div class="a" style="left:1504px;top:458px;width:24px;height:24px;border-radius:50%;background:#c2416b;border:1px solid #9a3a5a"></div>
<div class="t" style="left:1512.00px;top:464.34px;font-size:12px;color:#fff">A</div>
<svg style="left:1535.5px;top:462px" width="6" height="16" viewBox="0 0 6 16"><path d="M0 4.5L3 0.5L6 4.5z" fill="#c8c8c8"/><path d="M0 10L3 6L6 10z" fill="#c8c8c8"/><path d="M0 15.5L3 11.5L6 15.5z" fill="#111"/></svg>
<div class="t" style="left:1548.51px;top:463.59px;font-size:12.3px;color:#e8494b;font-weight:bold;letter-spacing:-0.655px">Новая</div>
<div class="t" style="left:1755.01px;top:463.84px;font-size:12px;color:#222;letter-spacing:-0.400px">P-4</div>
<div class="t" style="left:1694.88px;top:465.11px;font-size:10.5px;color:#222;letter-spacing:-0.190px">20.10.2025</div>
<div class="t" style="left:1503.43px;top:491.18px;font-size:14.2px;color:#222">Задача с новой меткой</div>
<div class="a" style="left:1496px;top:540px;width:285px;height:82px;background:#fff;border-radius:6px"></div>
<div class="a" style="left:1504px;top:548px;width:24px;height:24px;border-radius:50%;background:#c2416b;border:1px solid #9a3a5a"></div>
<div class="t" style="left:1512.00px;top:554.34px;font-size:12px;color:#fff">A</div>
<svg style="left:1535.5px;top:552px" width="6" height="16" viewBox="0 0 6 16"><path d="M0 4.5L3 0.5L6 4.5z" fill="#c8c8c8"/><path d="M0 10L3 6L6 10z" fill="#c8c8c8"/><path d="M0 15.5L3 11.5L6 15.5z" fill="#111"/></svg>
<div class="t" style="left:1548.51px;top:553.59px;font-size:12.3px;color:#e8494b;font-weight:bold;letter-spacing:-0.655px">Новая</div>
<div class="t" style="left:1748.73px;top:553.84px;font-size:12px;color:#222;letter-spacing:-0.400px">P-10</div>
<div class="t" style="left:1688.58px;top:555.11px;font-size:10.5px;color:#222;letter-spacing:-0.190px">20.10.2025</div>
<div class="t" style="left:1503.43px;top:581.18px;font-size:14.2px;color:#222">новая смета</div>
<div class="a" style="left:1496px;top:630px;width:285px;height:82px;background:#fff;border-radius:6px"></div>
<div class="a" style="left:1504px;top:638px;width:24px;height:24px;border-radius:50%;background:#c2416b;border:1px solid #9a3a5a"></div>
<div class="t" style="left:1512.00px;top:644.34px;font-size:12px;color:#fff">A</div>
<svg style="left:1535.5px;top:642px" width="6" height="16" viewBox="0 0 6 16"><path d="M0 4.5L3 0.5L6 4.5z" fill="#c8c8c8"/><path d="M0 10L3 6L6 10z" fill="#c8c8c8"/><path d="M0 15.5L3 11.5L6 15.5z" fill="#111"/></svg>
<div class="t" style="left:1548.51px;top:643.59px;font-size:12.3px;color:#e8494b;font-weight:bold;letter-spacing:-0.655px">Новая</div>
<div class="t" style="left:1749.62px;top:643.84px;font-size:12px;color:#222;letter-spacing:-0.400px">P-11</div>
<div class="t" style="left:1688.58px;top:645.11px;font-size:10.5px;color:#222;letter-spacing:-0.190px">20.10.2025</div>
<div class="t" style="left:1503.43px;top:671.18px;font-size:14.2px;color:#222">Задача с проверками</div>
<div class="a" style="left:1496px;top:720px;width:285px;height:82px;background:#fff;border-radius:6px"></div>
<div class="a" style="left:1504px;top:728px;width:24px;height:24px;border-radius:50%;background:#c2416b;border:1px solid #9a3a5a"></div>
<div class="t" style="left:1512.00px;top:734.34px;font-size:12px;color:#fff">A</div>
<svg style="left:1535.5px;top:732px" width="6" height="16" viewBox="0 0 6 16"><path d="M0 4.5L3 0.5L6 4.5z" fill="#c8c8c8"/><path d="M0 10L3 6L6 10z" fill="#c8c8c8"/><path d="M0 15.5L3 11.5L6 15.5z" fill="#111"/></svg>
<div class="t" style="left:1548.51px;top:733.59px;font-size:12.3px;color:#e8494b;font-weight:bold;letter-spacing:-0.655px">Новая</div>
<div class="t" style="left:1748.73px;top:733.84px;font-size:12px;color:#222;letter-spacing:-0.400px">P-12</div>
<div class="t" style="left:1688.58px;top:735.11px;font-size:10.5px;color:#222;letter-spacing:-0.190px">20.10.2025</div>
<div class="t" style="left:1503.43px;top:761.18px;font-size:14.2px;color:#222">Метка новая</div>
<!-- RIGHT TOOLBAR -->
<div class="a" style="left:1806px;top:36px;width:36px;height:776px;background:#545454;"></div>
<div class="a" style="left:1806px;top:128.5px;width:36px;height:1.2px;background:#6e6e6e;"></div>
<div class="a" style="left:1806px;top:397.8px;width:36px;height:1.2px;background:#6e6e6e;"></div>
<div class="a" style="left:1806px;top:446.3px;width:36px;height:1.2px;background:#6e6e6e;"></div>
<div class="a" style="left:1806px;top:627.5px;width:36px;height:1.2px;background:#6e6e6e;"></div>
<div class="a" style="left:1806px;top:720.5px;width:36px;height:1.2px;background:#6e6e6e;"></div>
<svg style="left:1811px;top:47px" width="26" height="26" viewBox="0 0 26 26"><path d="M8 19.5H6.5a5.5 5.5 0 0 1-1-10.9A7.5 7.5 0 0 1 19.5 7a5.5 5.5 0 0 1 0 12.5H18" fill="none" stroke="#e2e2e2" stroke-width="1.5"/><path d="M13 10v15M13 16l-3.5-3M13 19l3.5-3.5" fill="none" stroke="#e2e2e2" stroke-width="1.5"/></svg>
<svg style="left:1811px;top:91px" width="26" height="26" viewBox="0 0 26 26"><path d="M7 20.5H1V1h22v7" fill="none" stroke="#e2e2e2" stroke-width="1.3"/><path d="M7 20.5v2h3.5" fill="none" stroke="#e2e2e2" stroke-width="1.3"/><path d="M9.5 12.5V9h3.5M22 9h3.5v3.5M25.5 22.5V26H22M13 26H9.5v-3.5" fill="none" stroke="#e2e2e2" stroke-width="1.3"/><path d="M17.5 12.5l4.2 2.4v4.7L17.5 22l-4.2-2.4v-4.7z" fill="#e2e2e2"/></svg>
<svg style="left:1809px;top:148px" width="28" height="20" viewBox="0 0 28 20"><rect x="5.5" y="1" width="20" height="8.5" fill="none" stroke="#e2e2e2" stroke-width="1.5"/><path d="M8.5 3.5v3.5M11.5 5v2M14.5 3.5v3.5M17.5 5v2M20.5 3.5v3.5M23 5v2" stroke="#e2e2e2" stroke-width="1"/><path d="M1 15l4 3.5H1z" fill="#e2e2e2"/></svg>
<svg style="left:1810px;top:182px" width="28" height="30" viewBox="0 0 28 30"><path d="M9.2 8.7L19 0.8V20.4L9.2 28.7z" fill="#e2e2e2"/><path d="M0.8 17.5L8.7 11.1H27.3L19 17.5z" fill="none" stroke="#e2e2e2" stroke-width="1.3"/></svg>
<svg style="left:1811px;top:229px" width="26" height="24" viewBox="0 0 26 24"><path d="M1.4 5.7H18V22.8H1.4z M8.2 0.8H25V17.9H8.2z M1.4 5.7L8.2 0.8M18 5.7L25 0.8M18 22.8L25 17.9M1.4 22.8L8.2 17.9" fill="none" stroke="#e2e2e2" stroke-width="1.2"/><path d="M9.5 5.2L14.5 1.5V19L9.5 22.5z" fill="#e2e2e2"/></svg>
<svg style="left:1810px;top:273px" width="28" height="24" viewBox="0 0 28 24"><path d="M4 1h23v21H1V4z" fill="none" stroke="#e2e2e2" stroke-width="1.5"/><path d="M1 4l3-3v3z" fill="#e2e2e2"/><path d="M14 2v19M2 11.5h25" stroke="#e2e2e2" stroke-width="1.2" stroke-dasharray="2.5 1.5"/><path d="M21 22v-4.5h6" fill="none" stroke="#e2e2e2" stroke-width="1.5"/></svg>
<svg style="left:1812px;top:317px" width="24" height="24" viewBox="0 0 24 24"><circle cx="12" cy="12" r="7.5" fill="none" stroke="#e2e2e2" stroke-width="1.8"/><circle cx="12" cy="12" r="4" fill="#e2e2e2"/><path d="M12 1v3.5M12 19.5V23M1 12h3.5M19.5 12H23" stroke="#e2e2e2" stroke-width="1.8"/></svg>
<svg style="left:1810px;top:359px" width="28" height="28" viewBox="0 0 28 28"><circle cx="14" cy="14" r="12.6" fill="none" stroke="#e2e2e2" stroke-width="1.2"/><path d="M9 21.5V7.5c3-1.5 5 1.5 9 0v7c-4 1.5-6-1.5-9 0" fill="none" stroke="#e2e2e2" stroke-width="1.3"/></svg>
<svg style="left:1809px;top:407px" width="30" height="30" viewBox="0 0 30 30"><path d="M5 9l24 17M5 17.5l24 9.5M5 26l24-17M8 29l21-23" stroke="#e2e2e2" stroke-width="1"/><text x="0" y="23" font-size="7" fill="#e2e2e2" font-family="Liberation Sans">1</text><text x="11" y="6" font-size="7" fill="#e2e2e2" font-family="Liberation Sans">2</text></svg>
<svg style="left:1811px;top:458px" width="26" height="26" viewBox="0 0 26 26"><rect x="1" y="1" width="24" height="24" fill="none" stroke="#e2e2e2" stroke-width="1.2" stroke-dasharray="2 2"/><path d="M13 6.5l5.5 3v6.5L13 19l-5.5-3V9.5zM7.5 9.5L13 12.5l5.5-3M13 12.5V19" fill="none" stroke="#e2e2e2" stroke-width="1.1"/></svg>
<svg style="left:1811px;top:502.5px" width="26" height="25" viewBox="0 0 26 25"><rect x="1" y="1" width="24" height="23" fill="none" stroke="#e2e2e2" stroke-width="1.2" stroke-dasharray="2 2"/><path d="M5 12.5C8 8.5 18 8.5 21 12.5C18 16.5 8 16.5 5 12.5z" fill="#e2e2e2"/><circle cx="13" cy="12.5" r="2.6" fill="#545454"/><circle cx="13" cy="12.5" r="1.3" fill="#e2e2e2"/></svg>
<svg style="left:1811px;top:547px" width="26" height="25" viewBox="0 0 26 25"><rect x="1" y="1" width="24" height="23" fill="none" stroke="#e2e2e2" stroke-width="1.2" stroke-dasharray="2 2"/><path d="M5 12.5C8 8.5 18 8.5 21 12.5C18 16.5 8 16.5 5 12.5z" fill="#e2e2e2"/><circle cx="13" cy="12.5" r="2.6" fill="#545454"/><path d="M6.5 6.5l13 13" stroke="#545454" stroke-width="3"/><path d="M6.5 6.5l13 13" stroke="#e2e2e2" stroke-width="1.4"/></svg>
<svg style="left:1811px;top:590.5px" width="27" height="27" viewBox="0 0 27 27"><rect x="1" y="1" width="22" height="22" fill="none" stroke="#e2e2e2" stroke-width="1.2" stroke-dasharray="2 2"/><rect x="10.5" y="10.5" width="16" height="15.5" fill="#d8d8d8"/><path d="M14.5 14.5l8 8M22.5 14.5l-8 8" stroke="#545454" stroke-width="1.5"/></svg>
<div class="a" style="left:1808px;top:636px;width:32px;height:32px;background:#8a8a8a;"></div>
<svg style="left:1812px;top:640px" width="24" height="24" viewBox="0 0 24 24"><path d="M3.5 5.5L14 2l7 2.5v11.5L11 22 3.5 18z" fill="#f0f0f0"/><path d="M11 8.5L21 4.5v11.5L11 22z" fill="#cfcfcf"/><path d="M3.5 5.5L11 8.5V22" fill="none" stroke="#8a8a8a" stroke-width="0.8"/></svg>
<div class="a" style="left:1808px;top:680px;width:32px;height:32px;background:#8a8a8a;"></div>
<svg style="left:1811px;top:683px" width="26" height="26" viewBox="0 0 26 26"><ellipse cx="13" cy="13" rx="11" ry="5.5" fill="none" stroke="#e2e2e2" stroke-width="1.6"/><ellipse cx="13" cy="13" rx="5" ry="10.5" fill="none" stroke="#e2e2e2" stroke-width="1.6"/><path d="M13 13v-4M13 13l-3.5 2.5M13 13l3.5 2.5" stroke="#e2e2e2" stroke-width="1"/></svg>
<!-- MENU -->
<div class="a" style="left:715px;top:114px;width:240px;height:432px;background:#f0f0f0;box-shadow:0 3px 8px rgba(0,0,0,.35),0 1px 3px rgba(0,0,0,.2)"></div>
<div class="a" style="left:715px;top:162px;width:240px;height:1.3px;background:#d2d2d2;"></div>
<div class="a" style="left:715px;top:258.5px;width:240px;height:48px;background:#d1d1d1;"></div>
<div class="t" style="left:730.94px;top:132.08px;font-size:11.6px;color:#333;letter-spacing:0.427px">Применить к группе</div>
<div class="a" style="left:921px;top:130.5px;width:15.5px;height:15.5px;background:#3d8fb3;border-radius:2px"></div>
<svg style="left:921px;top:130.5px" width="15.5" height="15.5" viewBox="0 0 12 12"><path d="M2.3 6.3l2.4 2.4L9.8 3.6" fill="none" stroke="#fff" stroke-width="1.5"/></svg>
<div class="t" style="left:730.94px;top:180.58px;font-size:11.6px;color:#333;letter-spacing:0.357px">Сбросить все выделенные коллизии</div>
<div class="t" style="left:730.94px;top:228.68px;font-size:11.6px;color:#333;letter-spacing:0.383px">Изменить статус 5 коллизий</div>
<div class="t" style="left:730.94px;top:276.78px;font-size:11.6px;color:#333;letter-spacing:0.375px">Создать задачу из 5 коллизий</div>
<div class="t" style="left:730.94px;top:324.88px;font-size:11.6px;color:#333;letter-spacing:0.426px">Добавить к задаче 5 коллизий</div>
<div class="t" style="left:730.94px;top:372.98px;font-size:11.6px;color:#333;letter-spacing:0.397px">Изменить заметку у 5 коллизий</div>
<div class="t" style="left:730.94px;top:421.08px;font-size:11.6px;color:#333;letter-spacing:0.440px">Добавить к группе 5 коллизий</div>
<div class="t" style="left:730.94px;top:469.18px;font-size:11.6px;color:#333;letter-spacing:0.370px">Создать группу из 5 коллизий</div>
<div class="t" style="left:730.94px;top:517.28px;font-size:11.6px;color:#333;letter-spacing:0.358px">Сохранить вид 5 коллизий</div>
<svg style="left:0;top:0" width="1842" height="818"><defs><filter id="sh" x="-20%" y="-20%" width="140%" height="140%"><feGaussianBlur in="SourceAlpha" stdDeviation="2"/><feOffset dx="3" dy="3"/><feComponentTransfer><feFuncA type="linear" slope="0.55"/></feComponentTransfer><feMerge><feMergeNode/><feMergeNode in="SourceGraphic"/></feMerge></filter></defs><g filter="url(#sh)" fill="#c8000a" stroke="#c8000a"><path d="M779.2 622L774.8 305M779.2 622L720 566M779.2 622L724 643.5M779.2 622L714 719" fill="none" stroke-width="3"/><path d="M774.4 292L767 307L782.2 307z" stroke="none"/><path d="M711 557.7L727 563.5L718.5 573z" stroke="none"/><path d="M714 648.5L726.5 638.5L730 651.5z" stroke="none"/><path d="M707 730L709.5 715L722 723z" stroke="none"/></g></svg>
</body></html>
